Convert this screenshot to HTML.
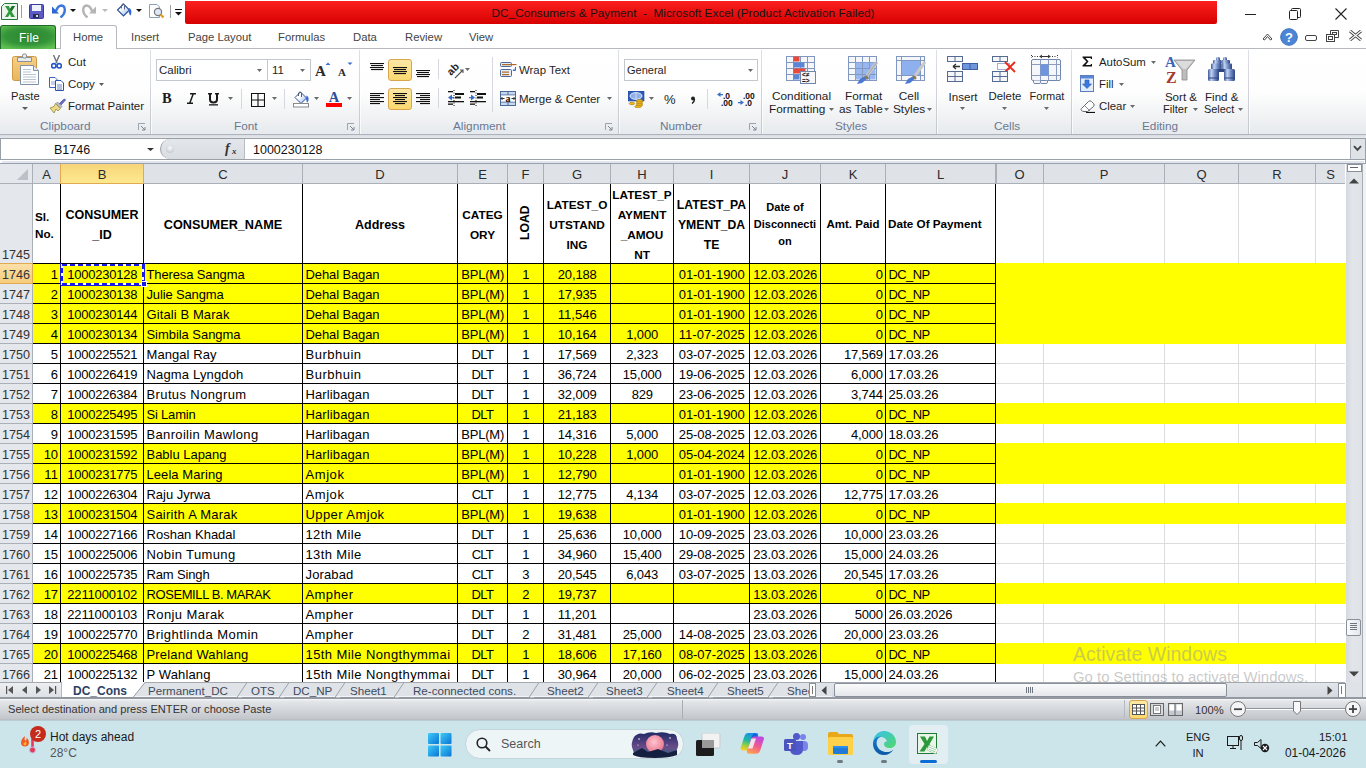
<!DOCTYPE html><html><head><meta charset="utf-8"><style>
*{box-sizing:border-box;margin:0;padding:0}
html,body{width:1366px;height:768px;overflow:hidden;background:#fff}
body{position:relative;font-family:"Liberation Sans",sans-serif;color:#000}
.a{position:absolute}
.ui{font-size:11.5px;color:#1e395b;white-space:nowrap}
.c{position:absolute;height:20px;line-height:20px;font-size:13px;white-space:nowrap;overflow:hidden;padding:0 2px 0 2.5px}
.l{text-align:left}.r{text-align:right}.m{text-align:center}
.hl{position:absolute;background:#000}
.gl{position:absolute;background:#dadcdd}
.ch{position:absolute;top:164px;height:19px;line-height:21px;text-align:center;font-size:13px;color:#2b2b2b;background:#dfe2e7}
.rh{position:absolute;left:0;width:32px;height:19px;line-height:23px;text-align:right;padding-right:2px;font-size:12.6px;color:#333;background:#e4e7ec}
.hb{font-weight:bold;font-size:13px;text-align:center;position:absolute;line-height:20px;white-space:nowrap}
</style></head><body>
<div class="a" style="left:0;top:163px;width:1345px;height:21px;background:#abb0b8"></div>
<div class="a" style="left:0;top:164px;width:32px;height:19px;background:#e4e7ec"></div>
<svg class="a" style="left:17px;top:169px" width="12" height="12"><path d="M11 0V11H0Z" fill="#bcc1c7"/></svg>
<div class="ch" style="left:33px;width:27px">A</div>
<div class="ch" style="left:60px;width:84px;background:linear-gradient(#f8d57a,#fde98f);border:1px solid #e2a951;border-top:none;top:164px;height:20px;line-height:21px">B</div>
<div class="ch" style="left:144px;width:158px">C</div>
<div class="ch" style="left:303px;width:154px">D</div>
<div class="ch" style="left:458px;width:49px">E</div>
<div class="ch" style="left:508px;width:35px">F</div>
<div class="ch" style="left:544px;width:66px">G</div>
<div class="ch" style="left:611px;width:62px">H</div>
<div class="ch" style="left:674px;width:75px">I</div>
<div class="ch" style="left:750px;width:70px">J</div>
<div class="ch" style="left:821px;width:64px">K</div>
<div class="ch" style="left:886px;width:109px">L</div>
<div class="ch" style="left:996px;width:47px">O</div>
<div class="ch" style="left:1044px;width:120px">P</div>
<div class="ch" style="left:1165px;width:73px">Q</div>
<div class="ch" style="left:1239px;width:76px">R</div>
<div class="ch" style="left:1316px;width:29px">S</div>
<div class="a" style="left:996px;top:164px;width:1px;height:19px;background:#abb0b8"></div>
<div class="a" style="left:33px;top:184px;width:1312px;height:499px;background:#fff"></div>
<div class="a" style="left:0;top:184px;width:33px;height:499px;background:#abb0b8"></div>
<div class="rh" style="top:184px;height:79px;line-height:13px;padding-top:65px">1745</div>
<div class="rh" style="top:263px;height:21px;line-height:22px;background:linear-gradient(#fbe0a8,#f5cc7c);border:1px solid #e2a951;border-left:none;width:33px">1746</div>
<div class="rh" style="top:284px">1747</div>
<div class="rh" style="top:304px">1748</div>
<div class="rh" style="top:324px">1749</div>
<div class="rh" style="top:344px">1750</div>
<div class="rh" style="top:364px">1751</div>
<div class="rh" style="top:384px">1752</div>
<div class="rh" style="top:404px">1753</div>
<div class="rh" style="top:424px">1754</div>
<div class="rh" style="top:444px">1755</div>
<div class="rh" style="top:464px">1756</div>
<div class="rh" style="top:484px">1757</div>
<div class="rh" style="top:504px">1758</div>
<div class="rh" style="top:524px">1759</div>
<div class="rh" style="top:544px">1760</div>
<div class="rh" style="top:564px">1761</div>
<div class="rh" style="top:584px">1762</div>
<div class="rh" style="top:604px">1763</div>
<div class="rh" style="top:624px">1764</div>
<div class="rh" style="top:644px">1765</div>
<div class="rh" style="top:664px">1766</div>
<div class="gl" style="left:996px;top:263px;width:349px;height:1px"></div>
<div class="gl" style="left:996px;top:283px;width:349px;height:1px"></div>
<div class="gl" style="left:996px;top:303px;width:349px;height:1px"></div>
<div class="gl" style="left:996px;top:323px;width:349px;height:1px"></div>
<div class="gl" style="left:996px;top:343px;width:349px;height:1px"></div>
<div class="gl" style="left:996px;top:363px;width:349px;height:1px"></div>
<div class="gl" style="left:996px;top:383px;width:349px;height:1px"></div>
<div class="gl" style="left:996px;top:403px;width:349px;height:1px"></div>
<div class="gl" style="left:996px;top:423px;width:349px;height:1px"></div>
<div class="gl" style="left:996px;top:443px;width:349px;height:1px"></div>
<div class="gl" style="left:996px;top:463px;width:349px;height:1px"></div>
<div class="gl" style="left:996px;top:483px;width:349px;height:1px"></div>
<div class="gl" style="left:996px;top:503px;width:349px;height:1px"></div>
<div class="gl" style="left:996px;top:523px;width:349px;height:1px"></div>
<div class="gl" style="left:996px;top:543px;width:349px;height:1px"></div>
<div class="gl" style="left:996px;top:563px;width:349px;height:1px"></div>
<div class="gl" style="left:996px;top:583px;width:349px;height:1px"></div>
<div class="gl" style="left:996px;top:603px;width:349px;height:1px"></div>
<div class="gl" style="left:996px;top:623px;width:349px;height:1px"></div>
<div class="gl" style="left:996px;top:643px;width:349px;height:1px"></div>
<div class="gl" style="left:996px;top:663px;width:349px;height:1px"></div>
<div class="gl" style="left:1043px;top:184px;width:1px;height:499px"></div>
<div class="gl" style="left:1164px;top:184px;width:1px;height:499px"></div>
<div class="gl" style="left:1238px;top:184px;width:1px;height:499px"></div>
<div class="gl" style="left:1315px;top:184px;width:1px;height:499px"></div>
<div class="a" style="left:33px;top:263px;width:1313px;height:21px;background:#ff0"></div>
<div class="a" style="left:33px;top:283px;width:1313px;height:21px;background:#ff0"></div>
<div class="a" style="left:33px;top:303px;width:1313px;height:21px;background:#ff0"></div>
<div class="a" style="left:33px;top:323px;width:1313px;height:21px;background:#ff0"></div>
<div class="a" style="left:33px;top:403px;width:1313px;height:21px;background:#ff0"></div>
<div class="a" style="left:33px;top:443px;width:1313px;height:21px;background:#ff0"></div>
<div class="a" style="left:33px;top:463px;width:1313px;height:21px;background:#ff0"></div>
<div class="a" style="left:33px;top:503px;width:1313px;height:21px;background:#ff0"></div>
<div class="a" style="left:33px;top:583px;width:1313px;height:21px;background:#ff0"></div>
<div class="a" style="left:33px;top:643px;width:1313px;height:21px;background:#ff0"></div>
<div class="hl" style="left:33px;top:263px;width:963px;height:1px"></div>
<div class="hl" style="left:33px;top:283px;width:963px;height:1px"></div>
<div class="hl" style="left:33px;top:303px;width:963px;height:1px"></div>
<div class="hl" style="left:33px;top:323px;width:963px;height:1px"></div>
<div class="hl" style="left:33px;top:343px;width:963px;height:1px"></div>
<div class="hl" style="left:33px;top:363px;width:963px;height:1px"></div>
<div class="hl" style="left:33px;top:383px;width:963px;height:1px"></div>
<div class="hl" style="left:33px;top:403px;width:963px;height:1px"></div>
<div class="hl" style="left:33px;top:423px;width:963px;height:1px"></div>
<div class="hl" style="left:33px;top:443px;width:963px;height:1px"></div>
<div class="hl" style="left:33px;top:463px;width:963px;height:1px"></div>
<div class="hl" style="left:33px;top:483px;width:963px;height:1px"></div>
<div class="hl" style="left:33px;top:503px;width:963px;height:1px"></div>
<div class="hl" style="left:33px;top:523px;width:963px;height:1px"></div>
<div class="hl" style="left:33px;top:543px;width:963px;height:1px"></div>
<div class="hl" style="left:33px;top:563px;width:963px;height:1px"></div>
<div class="hl" style="left:33px;top:583px;width:963px;height:1px"></div>
<div class="hl" style="left:33px;top:603px;width:963px;height:1px"></div>
<div class="hl" style="left:33px;top:623px;width:963px;height:1px"></div>
<div class="hl" style="left:33px;top:643px;width:963px;height:1px"></div>
<div class="hl" style="left:33px;top:663px;width:963px;height:1px"></div>
<div class="hl" style="left:60px;top:184px;width:1px;height:499px"></div>
<div class="hl" style="left:143px;top:184px;width:1px;height:499px"></div>
<div class="hl" style="left:302px;top:184px;width:1px;height:499px"></div>
<div class="hl" style="left:457px;top:184px;width:1px;height:499px"></div>
<div class="hl" style="left:507px;top:184px;width:1px;height:499px"></div>
<div class="hl" style="left:543px;top:184px;width:1px;height:499px"></div>
<div class="hl" style="left:610px;top:184px;width:1px;height:499px"></div>
<div class="hl" style="left:673px;top:184px;width:1px;height:499px"></div>
<div class="hl" style="left:749px;top:184px;width:1px;height:499px"></div>
<div class="hl" style="left:820px;top:184px;width:1px;height:499px"></div>
<div class="hl" style="left:885px;top:184px;width:1px;height:499px"></div>
<div class="hl" style="left:995px;top:184px;width:1px;height:499px"></div>
<div class="hb" style="left:35px;top:208px;font-size:11.7px;line-height:17px;text-align:left">Sl.<br>No.</div>
<div class="hb" style="left:61px;width:82px;top:205px;font-size:12.5px;line-height:20px">CONSUMER<br>_ID</div>
<div class="hb" style="left:144px;width:158px;top:215px;font-size:12.7px;line-height:20px">CONSUMER_NAME</div>
<div class="hb" style="left:303px;width:154px;top:215px;font-size:12.5px;line-height:20px">Address</div>
<div class="hb" style="left:458px;width:49px;top:205px;font-size:11.8px;line-height:20px">CATEG<br>ORY</div>
<div class="hb" style="left:508px;top:215px;width:34px;line-height:16px;font-size:12.2px;transform:rotate(-90deg)">LOAD</div>
<div class="hb" style="left:544px;width:66px;top:195px;font-size:11.8px;line-height:20px">LATEST_O<br>UTSTAND<br>ING</div>
<div class="hb" style="left:611px;width:62px;top:185px;font-size:11.8px;line-height:20px">LATEST_P<br>AYMENT<br>_AMOU<br>NT</div>
<div class="hb" style="left:674px;width:75px;top:195px;font-size:12.2px;line-height:20px">LATEST_PA<br>YMENT_DA<br>TE</div>
<div class="hb" style="left:750px;width:70px;top:199px;font-size:11px;line-height:17px">Date of<br>Disconnecti<br>on</div>
<div class="hb" style="left:821px;width:64px;top:214px;font-size:11.5px;line-height:20px">Amt. Paid</div>
<div class="hb" style="left:888px;top:214px;text-align:left;font-size:11.7px">Date Of Payment</div>
<div class="c r" style="left:33px;top:265px;width:27px"><span style="letter-spacing:-0.234px;margin-right:0.234px">1</span></div>
<div class="c m" style="left:61px;top:265px;width:82px"><span style="letter-spacing:-0.231px;margin-right:0.231px">1000230128</span></div>
<div class="c l" style="left:144px;top:265px;width:158px"><span style="letter-spacing:-0.124px;margin-right:0.124px">Theresa Sangma</span></div>
<div class="c l" style="left:303px;top:265px;width:154px"><span style="letter-spacing:-0.107px;margin-right:0.107px">Dehal Bagan</span></div>
<div class="c m" style="left:458px;top:265px;width:49px"><span style="letter-spacing:-0.177px;margin-right:0.177px">BPL(M)</span></div>
<div class="c m" style="left:508px;top:265px;width:35px"><span style="letter-spacing:-0.234px;margin-right:0.234px">1</span></div>
<div class="c m" style="left:544px;top:265px;width:66px"><span style="letter-spacing:-0.128px;margin-right:0.128px">20,188</span></div>
<div class="c m" style="left:674px;top:265px;width:75px"><span style="letter-spacing:-0.050px;margin-right:0.050px">01-01-1900</span></div>
<div class="c m" style="left:750px;top:265px;width:70px"><span style="letter-spacing:-0.108px;margin-right:0.108px">12.03.2026</span></div>
<div class="c r" style="left:821px;top:265px;width:64px"><span style="letter-spacing:-0.234px;margin-right:0.234px">0</span></div>
<div class="c l" style="left:886px;top:265px;width:109px"><span style="letter-spacing:-0.616px;margin-right:0.616px">DC_NP</span></div>
<div class="c r" style="left:33px;top:285px;width:27px"><span style="letter-spacing:-0.234px;margin-right:0.234px">2</span></div>
<div class="c m" style="left:61px;top:285px;width:82px"><span style="letter-spacing:-0.231px;margin-right:0.231px">1000230138</span></div>
<div class="c l" style="left:144px;top:285px;width:158px"><span style="letter-spacing:-0.148px;margin-right:0.148px">Julie Sangma</span></div>
<div class="c l" style="left:303px;top:285px;width:154px"><span style="letter-spacing:-0.107px;margin-right:0.107px">Dehal Bagan</span></div>
<div class="c m" style="left:458px;top:285px;width:49px"><span style="letter-spacing:-0.177px;margin-right:0.177px">BPL(M)</span></div>
<div class="c m" style="left:508px;top:285px;width:35px"><span style="letter-spacing:-0.234px;margin-right:0.234px">1</span></div>
<div class="c m" style="left:544px;top:285px;width:66px"><span style="letter-spacing:-0.128px;margin-right:0.128px">17,935</span></div>
<div class="c m" style="left:674px;top:285px;width:75px"><span style="letter-spacing:-0.050px;margin-right:0.050px">01-01-1900</span></div>
<div class="c m" style="left:750px;top:285px;width:70px"><span style="letter-spacing:-0.108px;margin-right:0.108px">12.03.2026</span></div>
<div class="c r" style="left:821px;top:285px;width:64px"><span style="letter-spacing:-0.234px;margin-right:0.234px">0</span></div>
<div class="c l" style="left:886px;top:285px;width:109px"><span style="letter-spacing:-0.616px;margin-right:0.616px">DC_NP</span></div>
<div class="c r" style="left:33px;top:305px;width:27px"><span style="letter-spacing:-0.234px;margin-right:0.234px">3</span></div>
<div class="c m" style="left:61px;top:305px;width:82px"><span style="letter-spacing:-0.231px;margin-right:0.231px">1000230144</span></div>
<div class="c l" style="left:144px;top:305px;width:158px"><span style="letter-spacing:0.097px;margin-right:-0.097px">Gitali B Marak</span></div>
<div class="c l" style="left:303px;top:305px;width:154px"><span style="letter-spacing:-0.107px;margin-right:0.107px">Dehal Bagan</span></div>
<div class="c m" style="left:458px;top:305px;width:49px"><span style="letter-spacing:-0.177px;margin-right:0.177px">BPL(M)</span></div>
<div class="c m" style="left:508px;top:305px;width:35px"><span style="letter-spacing:-0.234px;margin-right:0.234px">1</span></div>
<div class="c m" style="left:544px;top:305px;width:66px"><span style="letter-spacing:0.034px;margin-right:-0.034px">11,546</span></div>
<div class="c m" style="left:674px;top:305px;width:75px"><span style="letter-spacing:-0.050px;margin-right:0.050px">01-01-1900</span></div>
<div class="c m" style="left:750px;top:305px;width:70px"><span style="letter-spacing:-0.108px;margin-right:0.108px">12.03.2026</span></div>
<div class="c r" style="left:821px;top:305px;width:64px"><span style="letter-spacing:-0.234px;margin-right:0.234px">0</span></div>
<div class="c l" style="left:886px;top:305px;width:109px"><span style="letter-spacing:-0.616px;margin-right:0.616px">DC_NP</span></div>
<div class="c r" style="left:33px;top:325px;width:27px"><span style="letter-spacing:-0.234px;margin-right:0.234px">4</span></div>
<div class="c m" style="left:61px;top:325px;width:82px"><span style="letter-spacing:-0.231px;margin-right:0.231px">1000230134</span></div>
<div class="c l" style="left:144px;top:325px;width:158px"><span style="letter-spacing:-0.047px;margin-right:0.047px">Simbila Sangma</span></div>
<div class="c l" style="left:303px;top:325px;width:154px"><span style="letter-spacing:-0.107px;margin-right:0.107px">Dehal Bagan</span></div>
<div class="c m" style="left:458px;top:325px;width:49px"><span style="letter-spacing:-0.177px;margin-right:0.177px">BPL(M)</span></div>
<div class="c m" style="left:508px;top:325px;width:35px"><span style="letter-spacing:-0.234px;margin-right:0.234px">1</span></div>
<div class="c m" style="left:544px;top:325px;width:66px"><span style="letter-spacing:-0.128px;margin-right:0.128px">10,164</span></div>
<div class="c m" style="left:611px;top:325px;width:62px"><span style="letter-spacing:-0.109px;margin-right:0.109px">1,000</span></div>
<div class="c m" style="left:674px;top:325px;width:75px"><span style="letter-spacing:0.045px;margin-right:-0.045px">11-07-2025</span></div>
<div class="c m" style="left:750px;top:325px;width:70px"><span style="letter-spacing:-0.108px;margin-right:0.108px">12.03.2026</span></div>
<div class="c r" style="left:821px;top:325px;width:64px"><span style="letter-spacing:-0.234px;margin-right:0.234px">0</span></div>
<div class="c l" style="left:886px;top:325px;width:109px"><span style="letter-spacing:-0.616px;margin-right:0.616px">DC_NP</span></div>
<div class="c r" style="left:33px;top:345px;width:27px"><span style="letter-spacing:-0.234px;margin-right:0.234px">5</span></div>
<div class="c m" style="left:61px;top:345px;width:82px"><span style="letter-spacing:-0.231px;margin-right:0.231px">1000225521</span></div>
<div class="c l" style="left:144px;top:345px;width:158px"><span style="letter-spacing:0.062px;margin-right:-0.062px">Mangal Ray</span></div>
<div class="c l" style="left:303px;top:345px;width:154px"><span style="letter-spacing:0.494px;margin-right:-0.494px">Burbhuin</span></div>
<div class="c m" style="left:458px;top:345px;width:49px"><span style="letter-spacing:-0.536px;margin-right:0.536px">DLT</span></div>
<div class="c m" style="left:508px;top:345px;width:35px"><span style="letter-spacing:-0.234px;margin-right:0.234px">1</span></div>
<div class="c m" style="left:544px;top:345px;width:66px"><span style="letter-spacing:-0.128px;margin-right:0.128px">17,569</span></div>
<div class="c m" style="left:611px;top:345px;width:62px"><span style="letter-spacing:-0.109px;margin-right:0.109px">2,323</span></div>
<div class="c m" style="left:674px;top:345px;width:75px"><span style="letter-spacing:-0.050px;margin-right:0.050px">03-07-2025</span></div>
<div class="c m" style="left:750px;top:345px;width:70px"><span style="letter-spacing:-0.108px;margin-right:0.108px">12.03.2026</span></div>
<div class="c r" style="left:821px;top:345px;width:64px"><span style="letter-spacing:-0.128px;margin-right:0.128px">17,569</span></div>
<div class="c l" style="left:886px;top:345px;width:109px"><span style="letter-spacing:-0.076px;margin-right:0.076px">17.03.26</span></div>
<div class="c r" style="left:33px;top:365px;width:27px"><span style="letter-spacing:-0.234px;margin-right:0.234px">6</span></div>
<div class="c m" style="left:61px;top:365px;width:82px"><span style="letter-spacing:-0.231px;margin-right:0.231px">1000226419</span></div>
<div class="c l" style="left:144px;top:365px;width:158px"><span style="letter-spacing:0.160px;margin-right:-0.160px">Nagma Lyngdoh</span></div>
<div class="c l" style="left:303px;top:365px;width:154px"><span style="letter-spacing:0.494px;margin-right:-0.494px">Burbhuin</span></div>
<div class="c m" style="left:458px;top:365px;width:49px"><span style="letter-spacing:-0.536px;margin-right:0.536px">DLT</span></div>
<div class="c m" style="left:508px;top:365px;width:35px"><span style="letter-spacing:-0.234px;margin-right:0.234px">1</span></div>
<div class="c m" style="left:544px;top:365px;width:66px"><span style="letter-spacing:-0.128px;margin-right:0.128px">36,724</span></div>
<div class="c m" style="left:611px;top:365px;width:62px"><span style="letter-spacing:-0.128px;margin-right:0.128px">15,000</span></div>
<div class="c m" style="left:674px;top:365px;width:75px"><span style="letter-spacing:-0.050px;margin-right:0.050px">19-06-2025</span></div>
<div class="c m" style="left:750px;top:365px;width:70px"><span style="letter-spacing:-0.108px;margin-right:0.108px">12.03.2026</span></div>
<div class="c r" style="left:821px;top:365px;width:64px"><span style="letter-spacing:-0.109px;margin-right:0.109px">6,000</span></div>
<div class="c l" style="left:886px;top:365px;width:109px"><span style="letter-spacing:-0.076px;margin-right:0.076px">17.03.26</span></div>
<div class="c r" style="left:33px;top:385px;width:27px"><span style="letter-spacing:-0.234px;margin-right:0.234px">7</span></div>
<div class="c m" style="left:61px;top:385px;width:82px"><span style="letter-spacing:-0.231px;margin-right:0.231px">1000226384</span></div>
<div class="c l" style="left:144px;top:385px;width:158px"><span style="letter-spacing:0.382px;margin-right:-0.382px">Brutus Nongrum</span></div>
<div class="c l" style="left:303px;top:385px;width:154px"><span style="letter-spacing:0.113px;margin-right:-0.113px">Harlibagan</span></div>
<div class="c m" style="left:458px;top:385px;width:49px"><span style="letter-spacing:-0.536px;margin-right:0.536px">DLT</span></div>
<div class="c m" style="left:508px;top:385px;width:35px"><span style="letter-spacing:-0.234px;margin-right:0.234px">1</span></div>
<div class="c m" style="left:544px;top:385px;width:66px"><span style="letter-spacing:-0.128px;margin-right:0.128px">32,009</span></div>
<div class="c m" style="left:611px;top:385px;width:62px"><span style="letter-spacing:-0.234px;margin-right:0.234px">829</span></div>
<div class="c m" style="left:674px;top:385px;width:75px"><span style="letter-spacing:-0.050px;margin-right:0.050px">23-06-2025</span></div>
<div class="c m" style="left:750px;top:385px;width:70px"><span style="letter-spacing:-0.108px;margin-right:0.108px">12.03.2026</span></div>
<div class="c r" style="left:821px;top:385px;width:64px"><span style="letter-spacing:-0.109px;margin-right:0.109px">3,744</span></div>
<div class="c l" style="left:886px;top:385px;width:109px"><span style="letter-spacing:-0.076px;margin-right:0.076px">25.03.26</span></div>
<div class="c r" style="left:33px;top:405px;width:27px"><span style="letter-spacing:-0.234px;margin-right:0.234px">8</span></div>
<div class="c m" style="left:61px;top:405px;width:82px"><span style="letter-spacing:-0.231px;margin-right:0.231px">1000225495</span></div>
<div class="c l" style="left:144px;top:405px;width:158px"><span style="letter-spacing:-0.197px;margin-right:0.197px">Si Lamin</span></div>
<div class="c l" style="left:303px;top:405px;width:154px"><span style="letter-spacing:0.113px;margin-right:-0.113px">Harlibagan</span></div>
<div class="c m" style="left:458px;top:405px;width:49px"><span style="letter-spacing:-0.536px;margin-right:0.536px">DLT</span></div>
<div class="c m" style="left:508px;top:405px;width:35px"><span style="letter-spacing:-0.234px;margin-right:0.234px">1</span></div>
<div class="c m" style="left:544px;top:405px;width:66px"><span style="letter-spacing:-0.128px;margin-right:0.128px">21,183</span></div>
<div class="c m" style="left:674px;top:405px;width:75px"><span style="letter-spacing:-0.050px;margin-right:0.050px">01-01-1900</span></div>
<div class="c m" style="left:750px;top:405px;width:70px"><span style="letter-spacing:-0.108px;margin-right:0.108px">12.03.2026</span></div>
<div class="c r" style="left:821px;top:405px;width:64px"><span style="letter-spacing:-0.234px;margin-right:0.234px">0</span></div>
<div class="c l" style="left:886px;top:405px;width:109px"><span style="letter-spacing:-0.616px;margin-right:0.616px">DC_NP</span></div>
<div class="c r" style="left:33px;top:425px;width:27px"><span style="letter-spacing:-0.234px;margin-right:0.234px">9</span></div>
<div class="c m" style="left:61px;top:425px;width:82px"><span style="letter-spacing:-0.231px;margin-right:0.231px">1000231595</span></div>
<div class="c l" style="left:144px;top:425px;width:158px"><span style="letter-spacing:0.339px;margin-right:-0.339px">Banroilin Mawlong</span></div>
<div class="c l" style="left:303px;top:425px;width:154px"><span style="letter-spacing:0.113px;margin-right:-0.113px">Harlibagan</span></div>
<div class="c m" style="left:458px;top:425px;width:49px"><span style="letter-spacing:-0.177px;margin-right:0.177px">BPL(M)</span></div>
<div class="c m" style="left:508px;top:425px;width:35px"><span style="letter-spacing:-0.234px;margin-right:0.234px">1</span></div>
<div class="c m" style="left:544px;top:425px;width:66px"><span style="letter-spacing:-0.128px;margin-right:0.128px">14,316</span></div>
<div class="c m" style="left:611px;top:425px;width:62px"><span style="letter-spacing:-0.109px;margin-right:0.109px">5,000</span></div>
<div class="c m" style="left:674px;top:425px;width:75px"><span style="letter-spacing:-0.050px;margin-right:0.050px">25-08-2025</span></div>
<div class="c m" style="left:750px;top:425px;width:70px"><span style="letter-spacing:-0.108px;margin-right:0.108px">12.03.2026</span></div>
<div class="c r" style="left:821px;top:425px;width:64px"><span style="letter-spacing:-0.109px;margin-right:0.109px">4,000</span></div>
<div class="c l" style="left:886px;top:425px;width:109px"><span style="letter-spacing:-0.076px;margin-right:0.076px">18.03.26</span></div>
<div class="c r" style="left:33px;top:445px;width:27px"><span style="letter-spacing:-0.234px;margin-right:0.234px">10</span></div>
<div class="c m" style="left:61px;top:445px;width:82px"><span style="letter-spacing:-0.231px;margin-right:0.231px">1000231592</span></div>
<div class="c l" style="left:144px;top:445px;width:158px"><span style="letter-spacing:-0.021px;margin-right:0.021px">Bablu Lapang</span></div>
<div class="c l" style="left:303px;top:445px;width:154px"><span style="letter-spacing:0.113px;margin-right:-0.113px">Harlibagan</span></div>
<div class="c m" style="left:458px;top:445px;width:49px"><span style="letter-spacing:-0.177px;margin-right:0.177px">BPL(M)</span></div>
<div class="c m" style="left:508px;top:445px;width:35px"><span style="letter-spacing:-0.234px;margin-right:0.234px">1</span></div>
<div class="c m" style="left:544px;top:445px;width:66px"><span style="letter-spacing:-0.128px;margin-right:0.128px">10,228</span></div>
<div class="c m" style="left:611px;top:445px;width:62px"><span style="letter-spacing:-0.109px;margin-right:0.109px">1,000</span></div>
<div class="c m" style="left:674px;top:445px;width:75px"><span style="letter-spacing:-0.050px;margin-right:0.050px">05-04-2024</span></div>
<div class="c m" style="left:750px;top:445px;width:70px"><span style="letter-spacing:-0.108px;margin-right:0.108px">12.03.2026</span></div>
<div class="c r" style="left:821px;top:445px;width:64px"><span style="letter-spacing:-0.234px;margin-right:0.234px">0</span></div>
<div class="c l" style="left:886px;top:445px;width:109px"><span style="letter-spacing:-0.616px;margin-right:0.616px">DC_NP</span></div>
<div class="c r" style="left:33px;top:465px;width:27px"><span style="letter-spacing:0.250px;margin-right:-0.250px">11</span></div>
<div class="c m" style="left:61px;top:465px;width:82px"><span style="letter-spacing:-0.231px;margin-right:0.231px">1000231775</span></div>
<div class="c l" style="left:144px;top:465px;width:158px"><span style="letter-spacing:0.070px;margin-right:-0.070px">Leela Maring</span></div>
<div class="c l" style="left:303px;top:465px;width:154px"><span style="letter-spacing:0.575px;margin-right:-0.575px">Amjok</span></div>
<div class="c m" style="left:458px;top:465px;width:49px"><span style="letter-spacing:-0.177px;margin-right:0.177px">BPL(M)</span></div>
<div class="c m" style="left:508px;top:465px;width:35px"><span style="letter-spacing:-0.234px;margin-right:0.234px">1</span></div>
<div class="c m" style="left:544px;top:465px;width:66px"><span style="letter-spacing:-0.128px;margin-right:0.128px">12,790</span></div>
<div class="c m" style="left:674px;top:465px;width:75px"><span style="letter-spacing:-0.050px;margin-right:0.050px">01-01-1900</span></div>
<div class="c m" style="left:750px;top:465px;width:70px"><span style="letter-spacing:-0.108px;margin-right:0.108px">12.03.2026</span></div>
<div class="c r" style="left:821px;top:465px;width:64px"><span style="letter-spacing:-0.234px;margin-right:0.234px">0</span></div>
<div class="c l" style="left:886px;top:465px;width:109px"><span style="letter-spacing:-0.616px;margin-right:0.616px">DC_NP</span></div>
<div class="c r" style="left:33px;top:485px;width:27px"><span style="letter-spacing:-0.234px;margin-right:0.234px">12</span></div>
<div class="c m" style="left:61px;top:485px;width:82px"><span style="letter-spacing:-0.231px;margin-right:0.231px">1000226304</span></div>
<div class="c l" style="left:144px;top:485px;width:158px"><span style="letter-spacing:-0.030px;margin-right:0.030px">Raju Jyrwa</span></div>
<div class="c l" style="left:303px;top:485px;width:154px"><span style="letter-spacing:0.575px;margin-right:-0.575px">Amjok</span></div>
<div class="c m" style="left:458px;top:485px;width:49px"><span style="letter-spacing:-0.870px;margin-right:0.870px">CLT</span></div>
<div class="c m" style="left:508px;top:485px;width:35px"><span style="letter-spacing:-0.234px;margin-right:0.234px">1</span></div>
<div class="c m" style="left:544px;top:485px;width:66px"><span style="letter-spacing:-0.128px;margin-right:0.128px">12,775</span></div>
<div class="c m" style="left:611px;top:485px;width:62px"><span style="letter-spacing:-0.109px;margin-right:0.109px">4,134</span></div>
<div class="c m" style="left:674px;top:485px;width:75px"><span style="letter-spacing:-0.050px;margin-right:0.050px">03-07-2025</span></div>
<div class="c m" style="left:750px;top:485px;width:70px"><span style="letter-spacing:-0.108px;margin-right:0.108px">12.03.2026</span></div>
<div class="c r" style="left:821px;top:485px;width:64px"><span style="letter-spacing:-0.128px;margin-right:0.128px">12,775</span></div>
<div class="c l" style="left:886px;top:485px;width:109px"><span style="letter-spacing:-0.076px;margin-right:0.076px">17.03.26</span></div>
<div class="c r" style="left:33px;top:505px;width:27px"><span style="letter-spacing:-0.234px;margin-right:0.234px">13</span></div>
<div class="c m" style="left:61px;top:505px;width:82px"><span style="letter-spacing:-0.231px;margin-right:0.231px">1000231504</span></div>
<div class="c l" style="left:144px;top:505px;width:158px"><span style="letter-spacing:0.237px;margin-right:-0.237px">Sairith A Marak</span></div>
<div class="c l" style="left:303px;top:505px;width:154px"><span style="letter-spacing:0.416px;margin-right:-0.416px">Upper Amjok</span></div>
<div class="c m" style="left:458px;top:505px;width:49px"><span style="letter-spacing:-0.177px;margin-right:0.177px">BPL(M)</span></div>
<div class="c m" style="left:508px;top:505px;width:35px"><span style="letter-spacing:-0.234px;margin-right:0.234px">1</span></div>
<div class="c m" style="left:544px;top:505px;width:66px"><span style="letter-spacing:-0.128px;margin-right:0.128px">19,638</span></div>
<div class="c m" style="left:674px;top:505px;width:75px"><span style="letter-spacing:-0.050px;margin-right:0.050px">01-01-1900</span></div>
<div class="c m" style="left:750px;top:505px;width:70px"><span style="letter-spacing:-0.108px;margin-right:0.108px">12.03.2026</span></div>
<div class="c r" style="left:821px;top:505px;width:64px"><span style="letter-spacing:-0.234px;margin-right:0.234px">0</span></div>
<div class="c l" style="left:886px;top:505px;width:109px"><span style="letter-spacing:-0.616px;margin-right:0.616px">DC_NP</span></div>
<div class="c r" style="left:33px;top:525px;width:27px"><span style="letter-spacing:-0.234px;margin-right:0.234px">14</span></div>
<div class="c m" style="left:61px;top:525px;width:82px"><span style="letter-spacing:-0.231px;margin-right:0.231px">1000227166</span></div>
<div class="c l" style="left:144px;top:525px;width:158px"><span style="letter-spacing:0.007px;margin-right:-0.007px">Roshan Khadal</span></div>
<div class="c l" style="left:303px;top:525px;width:154px"><span style="letter-spacing:0.361px;margin-right:-0.361px">12th Mile</span></div>
<div class="c m" style="left:458px;top:525px;width:49px"><span style="letter-spacing:-0.536px;margin-right:0.536px">DLT</span></div>
<div class="c m" style="left:508px;top:525px;width:35px"><span style="letter-spacing:-0.234px;margin-right:0.234px">1</span></div>
<div class="c m" style="left:544px;top:525px;width:66px"><span style="letter-spacing:-0.128px;margin-right:0.128px">25,636</span></div>
<div class="c m" style="left:611px;top:525px;width:62px"><span style="letter-spacing:-0.128px;margin-right:0.128px">10,000</span></div>
<div class="c m" style="left:674px;top:525px;width:75px"><span style="letter-spacing:-0.050px;margin-right:0.050px">10-09-2025</span></div>
<div class="c m" style="left:750px;top:525px;width:70px"><span style="letter-spacing:-0.108px;margin-right:0.108px">23.03.2026</span></div>
<div class="c r" style="left:821px;top:525px;width:64px"><span style="letter-spacing:-0.128px;margin-right:0.128px">10,000</span></div>
<div class="c l" style="left:886px;top:525px;width:109px"><span style="letter-spacing:-0.076px;margin-right:0.076px">23.03.26</span></div>
<div class="c r" style="left:33px;top:545px;width:27px"><span style="letter-spacing:-0.234px;margin-right:0.234px">15</span></div>
<div class="c m" style="left:61px;top:545px;width:82px"><span style="letter-spacing:-0.231px;margin-right:0.231px">1000225006</span></div>
<div class="c l" style="left:144px;top:545px;width:158px"><span style="letter-spacing:0.370px;margin-right:-0.370px">Nobin Tumung</span></div>
<div class="c l" style="left:303px;top:545px;width:154px"><span style="letter-spacing:0.361px;margin-right:-0.361px">13th Mile</span></div>
<div class="c m" style="left:458px;top:545px;width:49px"><span style="letter-spacing:-0.870px;margin-right:0.870px">CLT</span></div>
<div class="c m" style="left:508px;top:545px;width:35px"><span style="letter-spacing:-0.234px;margin-right:0.234px">1</span></div>
<div class="c m" style="left:544px;top:545px;width:66px"><span style="letter-spacing:-0.128px;margin-right:0.128px">34,960</span></div>
<div class="c m" style="left:611px;top:545px;width:62px"><span style="letter-spacing:-0.128px;margin-right:0.128px">15,400</span></div>
<div class="c m" style="left:674px;top:545px;width:75px"><span style="letter-spacing:-0.050px;margin-right:0.050px">29-08-2025</span></div>
<div class="c m" style="left:750px;top:545px;width:70px"><span style="letter-spacing:-0.108px;margin-right:0.108px">23.03.2026</span></div>
<div class="c r" style="left:821px;top:545px;width:64px"><span style="letter-spacing:-0.128px;margin-right:0.128px">15,000</span></div>
<div class="c l" style="left:886px;top:545px;width:109px"><span style="letter-spacing:-0.076px;margin-right:0.076px">24.03.26</span></div>
<div class="c r" style="left:33px;top:565px;width:27px"><span style="letter-spacing:-0.234px;margin-right:0.234px">16</span></div>
<div class="c m" style="left:61px;top:565px;width:82px"><span style="letter-spacing:-0.231px;margin-right:0.231px">1000225735</span></div>
<div class="c l" style="left:144px;top:565px;width:158px"><span style="letter-spacing:-0.146px;margin-right:0.146px">Ram Singh</span></div>
<div class="c l" style="left:303px;top:565px;width:154px"><span style="letter-spacing:0.145px;margin-right:-0.145px">Jorabad</span></div>
<div class="c m" style="left:458px;top:565px;width:49px"><span style="letter-spacing:-0.870px;margin-right:0.870px">CLT</span></div>
<div class="c m" style="left:508px;top:565px;width:35px"><span style="letter-spacing:-0.234px;margin-right:0.234px">3</span></div>
<div class="c m" style="left:544px;top:565px;width:66px"><span style="letter-spacing:-0.128px;margin-right:0.128px">20,545</span></div>
<div class="c m" style="left:611px;top:565px;width:62px"><span style="letter-spacing:-0.109px;margin-right:0.109px">6,043</span></div>
<div class="c m" style="left:674px;top:565px;width:75px"><span style="letter-spacing:-0.050px;margin-right:0.050px">03-07-2025</span></div>
<div class="c m" style="left:750px;top:565px;width:70px"><span style="letter-spacing:-0.108px;margin-right:0.108px">13.03.2026</span></div>
<div class="c r" style="left:821px;top:565px;width:64px"><span style="letter-spacing:-0.128px;margin-right:0.128px">20,545</span></div>
<div class="c l" style="left:886px;top:565px;width:109px"><span style="letter-spacing:-0.076px;margin-right:0.076px">17.03.26</span></div>
<div class="c r" style="left:33px;top:585px;width:27px"><span style="letter-spacing:-0.234px;margin-right:0.234px">17</span></div>
<div class="c m" style="left:61px;top:585px;width:82px"><span style="letter-spacing:-0.134px;margin-right:0.134px">2211000102</span></div>
<div class="c l" style="left:144px;top:585px;width:158px"><span style="letter-spacing:-0.412px;margin-right:0.412px">ROSEMILL B. MARAK</span></div>
<div class="c l" style="left:303px;top:585px;width:154px"><span style="letter-spacing:0.411px;margin-right:-0.411px">Ampher</span></div>
<div class="c m" style="left:458px;top:585px;width:49px"><span style="letter-spacing:-0.536px;margin-right:0.536px">DLT</span></div>
<div class="c m" style="left:508px;top:585px;width:35px"><span style="letter-spacing:-0.234px;margin-right:0.234px">2</span></div>
<div class="c m" style="left:544px;top:585px;width:66px"><span style="letter-spacing:-0.128px;margin-right:0.128px">19,737</span></div>
<div class="c m" style="left:750px;top:585px;width:70px"><span style="letter-spacing:-0.108px;margin-right:0.108px">13.03.2026</span></div>
<div class="c r" style="left:821px;top:585px;width:64px"><span style="letter-spacing:-0.234px;margin-right:0.234px">0</span></div>
<div class="c l" style="left:886px;top:585px;width:109px"><span style="letter-spacing:-0.616px;margin-right:0.616px">DC_NP</span></div>
<div class="c r" style="left:33px;top:605px;width:27px"><span style="letter-spacing:-0.234px;margin-right:0.234px">18</span></div>
<div class="c m" style="left:61px;top:605px;width:82px"><span style="letter-spacing:-0.134px;margin-right:0.134px">2211000103</span></div>
<div class="c l" style="left:144px;top:605px;width:158px"><span style="letter-spacing:0.391px;margin-right:-0.391px">Ronju Marak</span></div>
<div class="c l" style="left:303px;top:605px;width:154px"><span style="letter-spacing:0.411px;margin-right:-0.411px">Ampher</span></div>
<div class="c m" style="left:458px;top:605px;width:49px"><span style="letter-spacing:-0.536px;margin-right:0.536px">DLT</span></div>
<div class="c m" style="left:508px;top:605px;width:35px"><span style="letter-spacing:-0.234px;margin-right:0.234px">1</span></div>
<div class="c m" style="left:544px;top:605px;width:66px"><span style="letter-spacing:0.034px;margin-right:-0.034px">11,201</span></div>
<div class="c m" style="left:750px;top:605px;width:70px"><span style="letter-spacing:-0.108px;margin-right:0.108px">23.03.2026</span></div>
<div class="c r" style="left:821px;top:605px;width:64px"><span style="letter-spacing:-0.230px;margin-right:0.230px">5000</span></div>
<div class="c l" style="left:886px;top:605px;width:109px"><span style="letter-spacing:-0.108px;margin-right:0.108px">26.03.2026</span></div>
<div class="c r" style="left:33px;top:625px;width:27px"><span style="letter-spacing:-0.234px;margin-right:0.234px">19</span></div>
<div class="c m" style="left:61px;top:625px;width:82px"><span style="letter-spacing:-0.231px;margin-right:0.231px">1000225770</span></div>
<div class="c l" style="left:144px;top:625px;width:158px"><span style="letter-spacing:0.468px;margin-right:-0.468px">Brightlinda Momin</span></div>
<div class="c l" style="left:303px;top:625px;width:154px"><span style="letter-spacing:0.411px;margin-right:-0.411px">Ampher</span></div>
<div class="c m" style="left:458px;top:625px;width:49px"><span style="letter-spacing:-0.536px;margin-right:0.536px">DLT</span></div>
<div class="c m" style="left:508px;top:625px;width:35px"><span style="letter-spacing:-0.234px;margin-right:0.234px">2</span></div>
<div class="c m" style="left:544px;top:625px;width:66px"><span style="letter-spacing:-0.128px;margin-right:0.128px">31,481</span></div>
<div class="c m" style="left:611px;top:625px;width:62px"><span style="letter-spacing:-0.128px;margin-right:0.128px">25,000</span></div>
<div class="c m" style="left:674px;top:625px;width:75px"><span style="letter-spacing:-0.050px;margin-right:0.050px">14-08-2025</span></div>
<div class="c m" style="left:750px;top:625px;width:70px"><span style="letter-spacing:-0.108px;margin-right:0.108px">23.03.2026</span></div>
<div class="c r" style="left:821px;top:625px;width:64px"><span style="letter-spacing:-0.128px;margin-right:0.128px">20,000</span></div>
<div class="c l" style="left:886px;top:625px;width:109px"><span style="letter-spacing:-0.076px;margin-right:0.076px">23.03.26</span></div>
<div class="c r" style="left:33px;top:645px;width:27px"><span style="letter-spacing:-0.234px;margin-right:0.234px">20</span></div>
<div class="c m" style="left:61px;top:645px;width:82px"><span style="letter-spacing:-0.231px;margin-right:0.231px">1000225468</span></div>
<div class="c l" style="left:144px;top:645px;width:158px"><span style="letter-spacing:0.183px;margin-right:-0.183px">Preland Wahlang</span></div>
<div class="c l" style="left:303px;top:645px;width:154px"><span style="letter-spacing:0.402px;margin-right:-0.402px">15th Mile Nongthymmai</span></div>
<div class="c m" style="left:458px;top:645px;width:49px"><span style="letter-spacing:-0.536px;margin-right:0.536px">DLT</span></div>
<div class="c m" style="left:508px;top:645px;width:35px"><span style="letter-spacing:-0.234px;margin-right:0.234px">1</span></div>
<div class="c m" style="left:544px;top:645px;width:66px"><span style="letter-spacing:-0.128px;margin-right:0.128px">18,606</span></div>
<div class="c m" style="left:611px;top:645px;width:62px"><span style="letter-spacing:-0.128px;margin-right:0.128px">17,160</span></div>
<div class="c m" style="left:674px;top:645px;width:75px"><span style="letter-spacing:-0.050px;margin-right:0.050px">08-07-2025</span></div>
<div class="c m" style="left:750px;top:645px;width:70px"><span style="letter-spacing:-0.108px;margin-right:0.108px">13.03.2026</span></div>
<div class="c r" style="left:821px;top:645px;width:64px"><span style="letter-spacing:-0.234px;margin-right:0.234px">0</span></div>
<div class="c l" style="left:886px;top:645px;width:109px"><span style="letter-spacing:-0.616px;margin-right:0.616px">DC_NP</span></div>
<div class="c r" style="left:33px;top:665px;width:27px"><span style="letter-spacing:-0.234px;margin-right:0.234px">21</span></div>
<div class="c m" style="left:61px;top:665px;width:82px"><span style="letter-spacing:-0.231px;margin-right:0.231px">1000225132</span></div>
<div class="c l" style="left:144px;top:665px;width:158px"><span style="letter-spacing:0.125px;margin-right:-0.125px">P Wahlang</span></div>
<div class="c l" style="left:303px;top:665px;width:154px"><span style="letter-spacing:0.402px;margin-right:-0.402px">15th Mile Nongthymmai</span></div>
<div class="c m" style="left:458px;top:665px;width:49px"><span style="letter-spacing:-0.536px;margin-right:0.536px">DLT</span></div>
<div class="c m" style="left:508px;top:665px;width:35px"><span style="letter-spacing:-0.234px;margin-right:0.234px">1</span></div>
<div class="c m" style="left:544px;top:665px;width:66px"><span style="letter-spacing:-0.128px;margin-right:0.128px">30,964</span></div>
<div class="c m" style="left:611px;top:665px;width:62px"><span style="letter-spacing:-0.128px;margin-right:0.128px">20,000</span></div>
<div class="c m" style="left:674px;top:665px;width:75px"><span style="letter-spacing:-0.050px;margin-right:0.050px">06-02-2025</span></div>
<div class="c m" style="left:750px;top:665px;width:70px"><span style="letter-spacing:-0.108px;margin-right:0.108px">23.03.2026</span></div>
<div class="c r" style="left:821px;top:665px;width:64px"><span style="letter-spacing:-0.128px;margin-right:0.128px">15,000</span></div>
<div class="c l" style="left:886px;top:665px;width:109px"><span style="letter-spacing:-0.076px;margin-right:0.076px">24.03.26</span></div>
<svg class="a" style="left:58px;top:261px" width="92" height="28" viewBox="0 0 92 28"><path d="M2.5 2V24.5H86.5V2" fill="none" stroke="#1a1ae6" stroke-width="1"/><rect x="4" y="4" width="81" height="19" fill="none" stroke="#fff" stroke-width="2"/><rect x="4" y="4" width="81" height="19" fill="none" stroke="#1a1ae6" stroke-width="2" stroke-dasharray="5 3"/><rect x="83.5" y="20.5" width="5" height="5" fill="#1a1ae6" stroke="#fff" stroke-width="1"/></svg>
<div class="a" style="left:0;top:0;width:1366px;height:49px;background:#fff"></div>
<svg class="a" style="left:1px;top:3px;" width="17" height="17" viewBox="0 0 17 17"><path d="M3.5 .5H16.5V16.5H.5V3.5Z" fill="#e9f5ea" stroke="#217a3a"/><path d="M4 3H8L9 6L11 3H14L10.5 8.5L14 14H10L9 11L7 14H4L7.5 8.5Z" fill="#2f9a3f"/><path d="M9 6L11 3H14L10.5 8.5Z" fill="#1f6e2f"/></svg>
<div class="a" style="left:21px;top:5px;width:1px;height:13px;background:#9aa0a6"></div>
<svg class="a" style="left:29px;top:4px;" width="15" height="15" viewBox="0 0 15 15"><rect x=".5" y=".5" width="14" height="14" rx="1" fill="#5b5bc8" stroke="#3b3b9a"/><rect x="3" y="1" width="9" height="6" fill="#eef0fa"/><rect x="4" y="10" width="6" height="4" fill="#2a2a55"/><rect x="7" y="11" width="2" height="2" fill="#ddd"/></svg>
<svg class="a" style="left:51px;top:3px;" width="15" height="15" viewBox="0 0 15 15"><path d="M5 8Q7 2.5 10.5 2.5Q14 3 13.8 7.5Q13.5 11.5 9.5 14.5" fill="none" stroke="#3a78e0" stroke-width="2.4"/><path d="M1 3.5V10.5H8Z" fill="#2d66d0"/></svg>
<svg class="a" style="left:70px;top:9px;" width="6" height="3" viewBox="0 0 6 3"><path d="M0 0H6L3.0 3Z" fill="#111"/></svg>
<svg class="a" style="left:82px;top:3px;" width="15" height="15" viewBox="0 0 15 15"><path d="M10 8Q8 2.5 4.5 2.5Q1 3 1.2 7.5Q1.5 11.5 5.5 14.5" fill="none" stroke="#b5b5b5" stroke-width="2.4"/><path d="M14 3.5V10.5H7Z" fill="#b5b5b5"/></svg>
<svg class="a" style="left:102px;top:9px;" width="6" height="3" viewBox="0 0 6 3"><path d="M0 0H6L3.0 3Z" fill="#b9b9b9"/></svg>
<svg class="a" style="left:116px;top:2px;" width="16" height="15" viewBox="0 0 16 15"><defs><linearGradient id="bk2" x1="0" y1="0" x2="1" y2="1"><stop offset=".35" stop-color="#fff"/><stop offset="1" stop-color="#8fb0e8"/></linearGradient></defs><path d="M1.5 8L7.5 2L13.5 8L7.5 14Z" fill="url(#bk2)" stroke="#2b4f95" stroke-width="1.1"/><path d="M5.5 6.5V3Q7 .5 8.5 3V7.5" fill="none" stroke="#5a6a8a" stroke-width="1"/><path d="M13 6Q15.8 7 15.3 11Q15 13.5 14 13.5L12.5 9.5Z" fill="#2f66d8"/></svg>
<svg class="a" style="left:136px;top:9px;" width="6" height="3" viewBox="0 0 6 3"><path d="M0 0H6L3.0 3Z" fill="#111"/></svg>
<svg class="a" style="left:149px;top:4px;" width="16" height="15" viewBox="0 0 16 15"><path d="M.5 .5H8L10.5 3V13.5H.5Z" fill="#fff" stroke="#8aa0bd"/><circle cx="9" cy="8" r="3.6" fill="#dbe9f8" stroke="#777" stroke-width="1.2"/><path d="M11.5 10.5L14.5 13.5" stroke="#e39b28" stroke-width="2.4"/></svg>
<div class="a" style="left:170px;top:5px;width:1px;height:13px;background:#9aa0a6"></div>
<svg class="a" style="left:175px;top:8px;" width="8" height="8" viewBox="0 0 8 8"><rect x="0" y="1" width="7" height="1" fill="#111"/><path d="M0 4H7L3.5 7.5Z" fill="#111"/></svg>
<div class="a" style="left:185px;top:1px;width:1032px;height:23px;background:linear-gradient(#fb2020,#d70000);border-radius:0 0 2px 2px"></div>
<div class="a" style="left:283px;top:7px;width:800px;text-align:center;font-size:11.8px;color:#141414;white-space:nowrap;line-height:13px">DC_Consumers &amp; Payment&nbsp; -&nbsp; Microsoft Excel (Product Activation Failed)</div>
<div class="a" style="left:1245px;top:14px;width:11px;height:1px;background:#222"></div>
<svg class="a" style="left:1289px;top:8px;" width="12" height="12" viewBox="0 0 12 12"><rect x=".5" y="2.5" width="8" height="9" rx="1" fill="none" stroke="#222"/><path d="M2.5 2.5V1.5Q2.5 .5 3.5 .5H10.5Q11.5 .5 11.5 1.5V8.5Q11.5 9.5 10.5 9.5H8.5" fill="none" stroke="#222"/></svg>
<svg class="a" style="left:1335px;top:8px;" width="12" height="12" viewBox="0 0 12 12"><path d="M.5 .5L11.5 11.5M11.5 .5L.5 11.5" stroke="#222" stroke-width="1.1"/></svg>
<div class="a" style="left:0;top:48px;width:1366px;height:1px;background:#b6babf"></div>
<div class="a" style="left:0;top:25px;width:56px;height:24px;border-radius:3px 3px 0 0;background:radial-gradient(ellipse 70% 60% at 50% 45%,#2a8530 0%,#35953a 60%,#5fc050 100%);border:1px solid #1f6a2a;border-bottom:none"></div>
<div class="a" style="left:19px;top:32px;font-size:12px;color:#fff;white-space:nowrap;line-height:1;font-weight:normal;letter-spacing:.2px">File</div>
<div class="a" style="left:60px;top:25px;width:57px;height:25px;border:1px solid #b6babf;border-bottom:none;border-radius:3px 3px 0 0;background:#fff"></div>
<div class="a" style="left:73px;top:32px;font-size:11.3px;color:#444;white-space:nowrap;line-height:1;">Home</div>
<div class="a" style="left:131px;top:32px;font-size:11.3px;color:#444;white-space:nowrap;line-height:1;">Insert</div>
<div class="a" style="left:188px;top:32px;font-size:11.3px;color:#444;white-space:nowrap;line-height:1;">Page Layout</div>
<div class="a" style="left:278px;top:32px;font-size:11.3px;color:#444;white-space:nowrap;line-height:1;">Formulas</div>
<div class="a" style="left:353px;top:32px;font-size:11.3px;color:#444;white-space:nowrap;line-height:1;">Data</div>
<div class="a" style="left:405px;top:32px;font-size:11.3px;color:#444;white-space:nowrap;line-height:1;">Review</div>
<div class="a" style="left:469px;top:32px;font-size:11.3px;color:#444;white-space:nowrap;line-height:1;">View</div>
<svg class="a" style="left:1262px;top:32px;" width="11" height="9" viewBox="0 0 11 9"><path d="M1 7L5.5 2L10 7L8.5 8L5.5 4.5L2.5 8Z" fill="#fff" stroke="#444" stroke-width="1"/></svg>
<svg class="a" style="left:1280px;top:28px;" width="18" height="18" viewBox="0 0 18 18"><circle cx="9" cy="9" r="8.3" fill="#4b86d6" stroke="#3a70bd"/><text x="9" y="13.6" font-size="13" font-weight="bold" text-anchor="middle" fill="#fff" font-family="Liberation Sans">?</text></svg>
<svg class="a" style="left:1305px;top:34px;" width="13" height="7" viewBox="0 0 13 7"><rect x=".5" y="1.5" width="11" height="5" rx="1.5" fill="#fff" stroke="#444"/></svg>
<svg class="a" style="left:1326px;top:30px;" width="14" height="12" viewBox="0 0 14 12"><rect x=".5" y="4.5" width="8" height="7" fill="#fff" stroke="#444"/><rect x="2.5" y="6.5" width="4" height="3" fill="none" stroke="#444"/><path d="M4.5 4.5V.5H12.5V7.5H8.5" fill="none" stroke="#444"/><rect x="6.5" y="2.5" width="4" height="2" fill="none" stroke="#444"/></svg>
<svg class="a" style="left:1349px;top:30px;" width="13" height="11" viewBox="0 0 13 11"><path d="M1 1L12 10M12 1L1 10" stroke="#444" stroke-width="3"/><path d="M1 1L12 10M12 1L1 10" stroke="#fff" stroke-width="1.2"/></svg>
<div class="a" style="left:0;top:49px;width:1366px;height:86px;background:linear-gradient(#fff 0%,#fefefe 50%,#e6e9ed 100%)"></div>
<div class="a" style="left:0;top:134px;width:1366px;height:1px;background:#aeb3ba"></div>
<div class="a" style="left:150px;top:50px;width:1px;height:84px;background:linear-gradient(#dde0e4,#c3c8ce)"></div>
<div class="a" style="left:151px;top:50px;width:1px;height:84px;background:#fff;opacity:.7"></div>
<div class="a" style="left:359px;top:50px;width:1px;height:84px;background:linear-gradient(#dde0e4,#c3c8ce)"></div>
<div class="a" style="left:360px;top:50px;width:1px;height:84px;background:#fff;opacity:.7"></div>
<div class="a" style="left:618px;top:50px;width:1px;height:84px;background:linear-gradient(#dde0e4,#c3c8ce)"></div>
<div class="a" style="left:619px;top:50px;width:1px;height:84px;background:#fff;opacity:.7"></div>
<div class="a" style="left:761px;top:50px;width:1px;height:84px;background:linear-gradient(#dde0e4,#c3c8ce)"></div>
<div class="a" style="left:762px;top:50px;width:1px;height:84px;background:#fff;opacity:.7"></div>
<div class="a" style="left:936px;top:50px;width:1px;height:84px;background:linear-gradient(#dde0e4,#c3c8ce)"></div>
<div class="a" style="left:937px;top:50px;width:1px;height:84px;background:#fff;opacity:.7"></div>
<div class="a" style="left:1071px;top:50px;width:1px;height:84px;background:linear-gradient(#dde0e4,#c3c8ce)"></div>
<div class="a" style="left:1072px;top:50px;width:1px;height:84px;background:#fff;opacity:.7"></div>
<div class="a" style="left:1248px;top:50px;width:1px;height:84px;background:linear-gradient(#dde0e4,#c3c8ce)"></div>
<div class="a" style="left:1249px;top:50px;width:1px;height:84px;background:#fff;opacity:.7"></div>
<div class="a" style="left:40px;top:121px;font-size:11.8px;color:#6a7891;white-space:nowrap;line-height:1;">Clipboard</div>
<div class="a" style="left:234px;top:121px;font-size:11.8px;color:#6a7891;white-space:nowrap;line-height:1;">Font</div>
<div class="a" style="left:453px;top:121px;font-size:11.8px;color:#6a7891;white-space:nowrap;line-height:1;">Alignment</div>
<div class="a" style="left:660px;top:121px;font-size:11.8px;color:#6a7891;white-space:nowrap;line-height:1;">Number</div>
<div class="a" style="left:835px;top:121px;font-size:11.8px;color:#6a7891;white-space:nowrap;line-height:1;">Styles</div>
<div class="a" style="left:994px;top:121px;font-size:11.8px;color:#6a7891;white-space:nowrap;line-height:1;">Cells</div>
<div class="a" style="left:1142px;top:121px;font-size:11.8px;color:#6a7891;white-space:nowrap;line-height:1;">Editing</div>
<svg class="a" style="left:138px;top:123px;" width="8" height="8" viewBox="0 0 8 8"><path d="M.5 7V.5H7" fill="none" stroke="#9aa3ae"/><path d="M3 3L7 7M7 4V7H4" fill="none" stroke="#7d8794"/></svg>
<svg class="a" style="left:347px;top:123px;" width="8" height="8" viewBox="0 0 8 8"><path d="M.5 7V.5H7" fill="none" stroke="#9aa3ae"/><path d="M3 3L7 7M7 4V7H4" fill="none" stroke="#7d8794"/></svg>
<svg class="a" style="left:605px;top:123px;" width="8" height="8" viewBox="0 0 8 8"><path d="M.5 7V.5H7" fill="none" stroke="#9aa3ae"/><path d="M3 3L7 7M7 4V7H4" fill="none" stroke="#7d8794"/></svg>
<svg class="a" style="left:749px;top:123px;" width="8" height="8" viewBox="0 0 8 8"><path d="M.5 7V.5H7" fill="none" stroke="#9aa3ae"/><path d="M3 3L7 7M7 4V7H4" fill="none" stroke="#7d8794"/></svg>
<svg class="a" style="left:11px;top:53px;" width="29" height="32" viewBox="0 0 29 32"><defs><linearGradient id="cb" x1="0" y1="0" x2="0" y2="1"><stop offset="0" stop-color="#f7d088"/><stop offset="1" stop-color="#eab55a"/></linearGradient></defs>
<rect x="1.5" y="3.5" width="24" height="24" rx="2" fill="url(#cb)" stroke="#cf9a45"/>
<path d="M6.5 4.5H20.5V8.5H6.5Z" fill="#e9ecef" stroke="#8a8f96"/><circle cx="13.5" cy="3" r="2.2" fill="#e9ecef" stroke="#8a8f96"/>
<path d="M9.5 12.5H22.5L27.5 17.5V31.5H9.5Z" fill="#fff" stroke="#7f8fa6"/><path d="M22.5 12.5V17.5H27.5" fill="#e8edf3" stroke="#7f8fa6"/>
<path d="M12 16.5H20M12 19H20M12 21.5H25M12 24H25M12 26.5H25M12 29H25" stroke="#b8c3d2"/></svg>
<div class="a" style="left:11px;top:91px;font-size:11.2px;color:#1e1e1e;white-space:nowrap;line-height:1;">Paste</div>
<svg class="a" style="left:22px;top:107px;" width="6" height="3" viewBox="0 0 6 3"><path d="M0 0H6L3.0 3Z" fill="#5c5c5c"/></svg>
<svg class="a" style="left:51px;top:55px;" width="11" height="14" viewBox="0 0 11 14"><path d="M2.5 0L6 8M8.5 0L5 8" stroke="#6e737a" stroke-width="1.4"/><circle cx="2.8" cy="10.8" r="2.2" fill="none" stroke="#2456c9" stroke-width="1.6"/><circle cx="8.2" cy="10.8" r="2.2" fill="none" stroke="#2456c9" stroke-width="1.6"/></svg>
<div class="a" style="left:68px;top:57px;font-size:11.5px;color:#1e1e1e;white-space:nowrap;line-height:1;">Cut</div>
<svg class="a" style="left:49px;top:77px;" width="16" height="14" viewBox="0 0 16 14"><path d="M.5 .5H6L8.5 3V10.5H.5Z" fill="#fff" stroke="#3a64b8"/><path d="M2 5H7M2 7H7" stroke="#6a8ad0" stroke-width=".8"/><path d="M6.5 3.5H12L14.5 6V13.5H6.5Z" fill="#fff" stroke="#2a54a8"/><path d="M8 8H13M8 10H13M8 12H13" stroke="#3a64b8" stroke-width=".8"/></svg>
<div class="a" style="left:68px;top:79px;font-size:11.5px;color:#1e1e1e;white-space:nowrap;line-height:1;">Copy</div>
<svg class="a" style="left:99px;top:83px;" width="5" height="3" viewBox="0 0 5 3"><path d="M0 0H5L2.5 3Z" fill="#5c5c5c"/></svg>
<svg class="a" style="left:49px;top:98px;" width="17" height="16" viewBox="0 0 17 16"><path d="M10 6L14.5 1.5Q16 .5 16.5 2L12 7" fill="#6b6fc7" stroke="#4a4fa8" stroke-width=".8"/><path d="M6.5 5.5L11.5 10.5L9 13L7 11L5 15L1 10L5 8.5Z" fill="#e8d98a" stroke="#9a8a40" stroke-width=".8"/><path d="M7 5.5L11.5 10L13 8.5L8.5 4Z" fill="#bfc4cc" stroke="#777" stroke-width=".6"/></svg>
<div class="a" style="left:68px;top:101px;font-size:11.5px;color:#1e1e1e;white-space:nowrap;line-height:1;">Format Painter</div>
<div class="a" style="left:156px;top:59px;width:112px;height:22px;background:#fff;border:1px solid #c3c8cf"></div>
<div class="a" style="left:267px;top:59px;width:44px;height:22px;background:#fff;border:1px solid #c3c8cf"></div>
<div class="a" style="left:159px;top:65px;font-size:11.5px;color:#1e1e1e;white-space:nowrap;line-height:1;">Calibri</div>
<div class="a" style="left:272px;top:65px;font-size:11.5px;color:#1e1e1e;white-space:nowrap;line-height:1;">11</div>
<svg class="a" style="left:257px;top:69px;" width="5" height="3" viewBox="0 0 5 3"><path d="M0 0H5L2.5 3Z" fill="#6a6a6a"/></svg>
<svg class="a" style="left:300px;top:69px;" width="5" height="3" viewBox="0 0 5 3"><path d="M0 0H5L2.5 3Z" fill="#6a6a6a"/></svg>
<svg class="a" style="left:315px;top:62px;" width="16" height="15" viewBox="0 0 16 15"><text x="0" y="14" font-family="Liberation Serif" font-weight="bold" font-size="15" fill="#2a2a2a">A</text><path d="M10.5 3L13 0.5L15.5 3Z" fill="#3a6fc9"/></svg>
<svg class="a" style="left:337px;top:62px;" width="16" height="15" viewBox="0 0 16 15"><text x="1" y="14" font-family="Liberation Serif" font-weight="bold" font-size="11" fill="#2a2a2a">A</text><path d="M10.5 .5H15.5L13 3Z" fill="#3a6fc9"/></svg>
<svg class="a" style="left:162px;top:91px;" width="14" height="14" viewBox="0 0 14 14"><text x="0" y="12.3" font-family="Liberation Serif" font-weight="bold" font-size="14.5" fill="#1a1a1a">B</text></svg>
<svg class="a" style="left:185px;top:93px;" width="12" height="13" viewBox="0 0 12 13"><path d="M5 .8H11M2 10.2H8M8.2 1L4.8 10" stroke="#1a1a1a" stroke-width="1.5" fill="none"/></svg>
<svg class="a" style="left:208px;top:93px;" width="12" height="15" viewBox="0 0 12 15"><path d="M0 .8H4M7 .8H11" stroke="#1a1a1a" stroke-width="1.4"/><path d="M2 .8V6.5Q2 9.5 5.5 9.5Q9 9.5 9 6.5V.8" stroke="#1a1a1a" stroke-width="2" fill="none"/><rect x="1" y="11.2" width="9" height="1.3" fill="#1a1a1a"/></svg>
<svg class="a" style="left:228px;top:97px;" width="5" height="3" viewBox="0 0 5 3"><path d="M0 0H5L2.5 3Z" fill="#6a6a6a"/></svg>
<div class="a" style="left:241px;top:89px;width:1px;height:20px;background:#d5d9de"></div>
<svg class="a" style="left:251px;top:93px;" width="14" height="14" viewBox="0 0 14 14"><path d="M.5 .5H13.5V13.5H.5ZM7 .5V13.5M.5 7H13.5" fill="none" stroke="#111" stroke-width="1.1"/></svg>
<svg class="a" style="left:272px;top:97px;" width="5" height="3" viewBox="0 0 5 3"><path d="M0 0H5L2.5 3Z" fill="#6a6a6a"/></svg>
<div class="a" style="left:284px;top:89px;width:1px;height:20px;background:#d5d9de"></div>
<svg class="a" style="left:293px;top:90px;" width="17" height="18" viewBox="0 0 17 18"><defs><linearGradient id="bk" x1="0" y1="0" x2="1" y2="1"><stop offset=".4" stop-color="#fff"/><stop offset="1" stop-color="#8fb0e8"/></linearGradient></defs><path d="M2 7.5L7.5 2L13.5 8L8 13.5Z" fill="url(#bk)" stroke="#2b4f95" stroke-width="1"/><path d="M5.5 6V3Q7 .5 8.5 3V7" fill="none" stroke="#4a5a7a" stroke-width="1"/><path d="M13.5 5.5Q16 6.5 15.5 10Q15 12.5 14 12.5L13 9Z" fill="#3a6ad8"/><rect x=".5" y="13.5" width="15" height="3.5" fill="#fff" stroke="#8a8a8a"/></svg>
<svg class="a" style="left:314px;top:97px;" width="5" height="3" viewBox="0 0 5 3"><path d="M0 0H5L2.5 3Z" fill="#6a6a6a"/></svg>
<svg class="a" style="left:326px;top:90px;" width="17" height="18" viewBox="0 0 17 18"><text x="8" y="12.3" text-anchor="middle" font-family="Liberation Serif" font-weight="bold" font-size="14.5" fill="#2a4d9c">A</text><rect x="0" y="13" width="16" height="4" fill="#ff0000"/></svg>
<svg class="a" style="left:347px;top:97px;" width="5" height="3" viewBox="0 0 5 3"><path d="M0 0H5L2.5 3Z" fill="#6a6a6a"/></svg>
<div class="a" style="left:388px;top:59px;width:24px;height:22px;border:1px solid #d9a54f;border-radius:3px;background:linear-gradient(#fde9a6,#fbd86f)"></div>
<div class="a" style="left:388px;top:88px;width:24px;height:22px;border:1px solid #d9a54f;border-radius:3px;background:linear-gradient(#fde9a6,#fbd86f)"></div>
<svg class="a" style="left:370px;top:63px;" width="15" height="8" viewBox="0 0 15 8"><rect x="0" y="0" width="14" height="1.1" fill="#111"/><rect x="1" y="2" width="12" height="1.1" fill="#111"/><rect x="0" y="4" width="14" height="1.1" fill="#111"/><rect x="1" y="6" width="12" height="1.1" fill="#111"/></svg>
<svg class="a" style="left:393px;top:67px;" width="15" height="8" viewBox="0 0 15 8"><rect x="0" y="0" width="14" height="1.1" fill="#111"/><rect x="1" y="2" width="12" height="1.1" fill="#111"/><rect x="0" y="4" width="14" height="1.1" fill="#111"/><rect x="1" y="6" width="12" height="1.1" fill="#111"/></svg>
<svg class="a" style="left:416px;top:70px;" width="15" height="8" viewBox="0 0 15 8"><rect x="0" y="0" width="14" height="1.1" fill="#111"/><rect x="1" y="2" width="12" height="1.1" fill="#111"/><rect x="0" y="4" width="14" height="1.1" fill="#111"/><rect x="1" y="6" width="12" height="1.1" fill="#111"/></svg>
<svg class="a" style="left:370px;top:93px;" width="15" height="12" viewBox="0 0 15 12"><rect x="0" y="0" width="14" height="1.1" fill="#111"/><rect x="0" y="2" width="10" height="1.1" fill="#111"/><rect x="0" y="4" width="14" height="1.1" fill="#111"/><rect x="0" y="6" width="10" height="1.1" fill="#111"/><rect x="0" y="8" width="14" height="1.1" fill="#111"/><rect x="0" y="10" width="10" height="1.1" fill="#111"/></svg>
<svg class="a" style="left:393px;top:93px;" width="15" height="12" viewBox="0 0 15 12"><rect x="0" y="0" width="14" height="1.1" fill="#111"/><rect x="2" y="2" width="10" height="1.1" fill="#111"/><rect x="0" y="4" width="14" height="1.1" fill="#111"/><rect x="2" y="6" width="10" height="1.1" fill="#111"/><rect x="0" y="8" width="14" height="1.1" fill="#111"/><rect x="2" y="10" width="10" height="1.1" fill="#111"/></svg>
<svg class="a" style="left:416px;top:93px;" width="15" height="12" viewBox="0 0 15 12"><rect x="0" y="0" width="14" height="1.1" fill="#111"/><rect x="4" y="2" width="10" height="1.1" fill="#111"/><rect x="0" y="4" width="14" height="1.1" fill="#111"/><rect x="4" y="6" width="10" height="1.1" fill="#111"/><rect x="0" y="8" width="14" height="1.1" fill="#111"/><rect x="4" y="10" width="10" height="1.1" fill="#111"/></svg>
<div class="a" style="left:438px;top:59px;width:1px;height:20px;background:#d5d9de"></div>
<div class="a" style="left:438px;top:88px;width:1px;height:20px;background:#d5d9de"></div>
<svg class="a" style="left:446px;top:61px;" width="20" height="18" viewBox="0 0 20 18"><g transform="rotate(-45 8 9)"><text x="1" y="12" font-family="Liberation Sans" font-weight="bold" font-size="10.5" fill="#222" transform="rotate(90 8 9)"></text></g><text x="0" y="0" font-family="Liberation Sans" font-weight="bold" font-size="10.5" fill="#222" transform="translate(5 15) rotate(-45)">ab</text><path d="M9 17L17 9M14 9H17V12" fill="none" stroke="#555" stroke-width="1.1"/></svg>
<svg class="a" style="left:465px;top:68px;" width="5" height="3" viewBox="0 0 5 3"><path d="M0 0H5L2.5 3Z" fill="#6a6a6a"/></svg>
<svg class="a" style="left:447px;top:90px;" width="18" height="17" viewBox="0 0 18 17"><path d="M1 7.5L5 4.5V10.5Z" fill="#3a6fc9"/><rect x="2" y="7" width="5" height="1.3" fill="#3a6fc9"/><rect x="8" y="3" width="9" height="2" fill="#111"/><rect x="8" y="6.5" width="6" height="2" fill="#111"/><rect x="1" y="11" width="16" height="1.3" fill="#111"/><rect x="1" y="13.5" width="5" height="1.3" fill="#111"/><rect x="1" y="1" width="5" height="1.3" fill="#111"/><path d="M7 0V17" stroke="#111" stroke-dasharray="1 1.5"/></svg>
<svg class="a" style="left:469px;top:90px;" width="18" height="17" viewBox="0 0 18 17"><path d="M6 7.5L2 4.5V10.5Z" fill="#3a6fc9"/><rect x="0" y="7" width="5" height="1.3" fill="#3a6fc9"/><rect x="8" y="3" width="9" height="2" fill="#111"/><rect x="8" y="6.5" width="6" height="2" fill="#111"/><rect x="1" y="11" width="16" height="1.3" fill="#111"/><rect x="1" y="13.5" width="5" height="1.3" fill="#111"/><rect x="1" y="1" width="5" height="1.3" fill="#111"/><path d="M7 0V17" stroke="#111" stroke-dasharray="1 1.5"/></svg>
<div class="a" style="left:492px;top:57px;width:1px;height:55px;background:#d5d9de"></div>
<svg class="a" style="left:500px;top:62px;" width="17" height="16" viewBox="0 0 17 16"><rect x=".5" y=".5" width="11" height="4" rx="1" fill="#e6ecf5" stroke="#4a6a9a"/><rect x="2" y="2" width="14.5" height="1.2" fill="#b06a2a"/><rect x=".5" y="7.5" width="11" height="7" rx="1" fill="#e6ecf5" stroke="#4a6a9a"/><rect x="2" y="9.5" width="7" height="1.2" fill="#b06a2a"/><rect x="2" y="12" width="7" height="1.2" fill="#b06a2a"/><path d="M15.5 5V8.5H13M13 8.5L15 6.5" fill="none" stroke="#3a6fc9"/></svg>
<div class="a" style="left:519px;top:65px;font-size:11.4px;color:#1e1e1e;white-space:nowrap;line-height:1;">Wrap Text</div>
<svg class="a" style="left:500px;top:91px;" width="17" height="16" viewBox="0 0 17 16"><rect x=".5" y=".5" width="15" height="14" fill="#c9d7ec" stroke="#4a6a9a"/><path d="M8 .5V4M8 11V14.5M.5 4H15.5M.5 11H15.5" stroke="#4a6a9a"/><rect x="1" y="4.5" width="14" height="6" fill="#fff"/><text x="8" y="10.5" text-anchor="middle" font-family="Liberation Serif" font-weight="bold" font-size="10" fill="#111">a</text><path d="M1 7.5H4.5M11.5 7.5H15M1 7.5L2.5 6M1 7.5L2.5 9M15 7.5L13.5 6M15 7.5L13.5 9" stroke="#222" stroke-width=".9" fill="none"/></svg>
<div class="a" style="left:519px;top:94px;font-size:11.5px;color:#1e1e1e;white-space:nowrap;line-height:1;">Merge &amp; Center</div>
<svg class="a" style="left:607px;top:97px;" width="5" height="3" viewBox="0 0 5 3"><path d="M0 0H5L2.5 3Z" fill="#6a6a6a"/></svg>
<div class="a" style="left:624px;top:59px;width:134px;height:22px;background:#fff;border:1px solid #c3c8cf"></div>
<div class="a" style="left:627px;top:65px;font-size:11px;color:#1e1e1e;white-space:nowrap;line-height:1;">General</div>
<svg class="a" style="left:748px;top:69px;" width="5" height="3" viewBox="0 0 5 3"><path d="M0 0H5L2.5 3Z" fill="#6a6a6a"/></svg>
<svg class="a" style="left:628px;top:91px;" width="17" height="17" viewBox="0 0 17 17"><rect x="0" y="0" width="16" height="10" fill="#2f5cb8" stroke="#1f4090" stroke-width=".6"/><ellipse cx="8" cy="5" rx="6" ry="3.4" fill="#8fb0e8" stroke="#e8f0ff" stroke-width=".9"/><path d="M8 2V8" stroke="#e8f0ff" stroke-width=".7"/><ellipse cx="11.5" cy="10" rx="3.2" ry="1.4" fill="#f0b820" stroke="#a07808" stroke-width=".6"/><ellipse cx="11.5" cy="12" rx="3.2" ry="1.4" fill="#f0b820" stroke="#a07808" stroke-width=".6"/><ellipse cx="11.5" cy="14" rx="3.2" ry="1.4" fill="#f0b820" stroke="#a07808" stroke-width=".6"/><ellipse cx="10" cy="15.6" rx="3.2" ry="1.3" fill="#f0b820" stroke="#a07808" stroke-width=".6"/><ellipse cx="4" cy="12.5" rx="2.8" ry="1.2" fill="#f0b820" stroke="#a07808" stroke-width=".6"/></svg>
<svg class="a" style="left:649px;top:97px;" width="5" height="3" viewBox="0 0 5 3"><path d="M0 0H5L2.5 3Z" fill="#6a6a6a"/></svg>
<div class="a" style="left:664px;top:93px;font-size:13px;color:#222;white-space:nowrap;line-height:1;font-weight:normal">%</div>
<svg class="a" style="left:690px;top:96px;" width="6" height="8" viewBox="0 0 6 8"><circle cx="3" cy="2.5" r="2" fill="#222"/><path d="M4.5 3Q4.5 6 2 7.5" stroke="#222" stroke-width="1.4" fill="none"/></svg>
<div class="a" style="left:707px;top:89px;width:1px;height:20px;background:#d5d9de"></div>
<svg class="a" style="left:716px;top:91px;" width="18" height="16" viewBox="0 0 18 16"><path d="M1 3.5L4.5 1V6Z" fill="#3a6fc9"/><rect x="3" y="3" width="4" height="1.3" fill="#3a6fc9"/><text x="7" y="8" font-family="Liberation Sans" font-weight="bold" font-size="8.5" fill="#111">.0</text><text x="5" y="15" font-family="Liberation Sans" font-weight="bold" font-size="8.5" fill="#111">.00</text></svg>
<svg class="a" style="left:738px;top:91px;" width="18" height="16" viewBox="0 0 18 16"><text x="5" y="8" font-family="Liberation Sans" font-weight="bold" font-size="8.5" fill="#111">.00</text><path d="M6 11.5L2.5 9V14Z" fill="#3a6fc9"/><rect x="0" y="11" width="4" height="1.3" fill="#3a6fc9"/><text x="7" y="15" font-family="Liberation Sans" font-weight="bold" font-size="8.5" fill="#111">.0</text></svg>
<svg class="a" style="left:785px;top:55px;" width="32" height="30" viewBox="0 0 32 30"><rect x="1.5" y="1.5" width="28" height="24" fill="#f4f6fa" stroke="#8098bf"/><path d="M8.5 1V25.5" stroke="#8098bf"/><path d="M15.5 1V25.5" stroke="#8098bf"/><path d="M22.5 1V25.5" stroke="#8098bf"/><path d="M1 7.5H29.5" stroke="#8098bf"/><path d="M1 13.5H29.5" stroke="#8098bf"/><path d="M1 19.5H29.5" stroke="#8098bf"/><rect x="8.5" y="1.5" width="6" height="5" fill="#e9493a"/><rect x="8.5" y="7.5" width="11" height="5" fill="#5b86d6"/><rect x="8.5" y="13.5" width="12" height="5" fill="#e9493a"/><rect x="8.5" y="19.5" width="6" height="5" fill="#5b86d6"/><rect x="15.5" y="16.5" width="15" height="12" fill="#f5f7fb" stroke="#6f86ad"/><text x="17" y="22" font-family="Liberation Sans" font-weight="bold" font-size="6.5" fill="#111">&lt;≠</text><text x="17" y="28" font-family="Liberation Sans" font-weight="bold" font-size="6.5" fill="#111">=&gt;</text></svg>
<div class="a" style="left:766px;width:71px;top:91px;font-size:11.8px;color:#1e1e1e;white-space:nowrap;line-height:1;text-align:center;">Conditional</div>
<div class="a" style="left:769px;top:104px;font-size:11.8px;color:#1e1e1e;white-space:nowrap;line-height:1;">Formatting</div>
<svg class="a" style="left:829px;top:108px;" width="5" height="3" viewBox="0 0 5 3"><path d="M0 0H5L2.5 3Z" fill="#6a6a6a"/></svg>
<svg class="a" style="left:847px;top:55px;" width="32" height="30" viewBox="0 0 32 30"><rect x="1.5" y="1.5" width="28" height="24" fill="#f4f6fa" stroke="#8098bf"/><path d="M8.5 1V25.5" stroke="#8098bf"/><path d="M15.5 1V25.5" stroke="#8098bf"/><path d="M22.5 1V25.5" stroke="#8098bf"/><path d="M1 7.5H29.5" stroke="#8098bf"/><path d="M1 13.5H29.5" stroke="#8098bf"/><path d="M1 19.5H29.5" stroke="#8098bf"/><rect x="8.5" y="7.5" width="20" height="17" fill="#8eb0ee" opacity=".9"/><path d="M8.5 13.5H28.5M8.5 19.5H28.5M15.5 7.5V24.5M22.5 7.5V24.5" stroke="#8098bf"/><path d="M30 7L19 22" stroke="#c8c8c8" stroke-width="3"/><path d="M30 7L19 22" stroke="#888" stroke-width=".6"/><path d="M19.5 20.5L21.5 22.5L15 28L10 29L13 24Z" fill="#4a79d0"/><path d="M18 21L21 24" stroke="#9a7a3a" stroke-width="2"/></svg>
<div class="a" style="left:845px;top:91px;font-size:11.8px;color:#1e1e1e;white-space:nowrap;line-height:1;">Format</div>
<div class="a" style="left:839px;top:104px;font-size:11.8px;color:#1e1e1e;white-space:nowrap;line-height:1;">as Table</div>
<svg class="a" style="left:884px;top:108px;" width="5" height="3" viewBox="0 0 5 3"><path d="M0 0H5L2.5 3Z" fill="#6a6a6a"/></svg>
<svg class="a" style="left:895px;top:55px;" width="32" height="30" viewBox="0 0 32 30"><rect x="1.5" y="1.5" width="5" height="5" fill="#f4f6fa" stroke="#8098bf"/><rect x="1.5" y="1.5" width="28" height="24" fill="#f4f6fa" stroke="#8098bf"/><rect x="6.5" y="5.5" width="19" height="15" fill="#8eb0ee" stroke="#6f90d0"/><path d="M1.5 5.5H29.5M1.5 20.5H29.5M6.5 1.5V25.5M25.5 1.5V25.5" stroke="#8098bf"/><path d="M30 7L19 22" stroke="#c8c8c8" stroke-width="3"/><path d="M19.5 20.5L21.5 22.5L15 28L10 29L13 24Z" fill="#4a79d0"/><path d="M18 21L21 24" stroke="#9a7a3a" stroke-width="2"/></svg>
<div class="a" style="left:893px;width:32px;top:91px;font-size:11.8px;color:#1e1e1e;white-space:nowrap;line-height:1;text-align:center;">Cell</div>
<div class="a" style="left:893px;top:104px;font-size:11.8px;color:#1e1e1e;white-space:nowrap;line-height:1;">Styles</div>
<svg class="a" style="left:927px;top:108px;" width="5" height="3" viewBox="0 0 5 3"><path d="M0 0H5L2.5 3Z" fill="#6a6a6a"/></svg>
<svg class="a" style="left:946px;top:55px;" width="33" height="28" viewBox="0 0 33 28"><rect x="1.5" y="1.5" width="15" height="5" fill="#f4f6fa" stroke="#556b8f"/><path d="M9 1.5V6.5" stroke="#556b8f"/><rect x="16.5" y="8.5" width="15" height="6" fill="#6f95dc" stroke="#3f5f9f"/><path d="M24 8.5V14.5" stroke="#3f5f9f"/><path d="M7 11.5H14M7 11.5L10 9M7 11.5L10 14" stroke="#333" stroke-width="1.3" fill="none"/><rect x="1.5" y="16.5" width="15" height="10" fill="#f4f6fa" stroke="#556b8f"/><path d="M9 16.5V26.5M1.5 21.5H16.5" stroke="#556b8f"/></svg>
<div class="a" style="left:938px;width:50px;top:91px;font-size:11.6px;color:#1e1e1e;white-space:nowrap;line-height:1;text-align:center;">Insert</div>
<svg class="a" style="left:960px;top:107px;" width="5" height="3" viewBox="0 0 5 3"><path d="M0 0H5L2.5 3Z" fill="#6a6a6a"/></svg>
<svg class="a" style="left:991px;top:55px;" width="28" height="28" viewBox="0 0 28 28"><rect x="1.5" y="1.5" width="15" height="5" fill="#f4f6fa" stroke="#556b8f"/><path d="M9 1.5V6.5" stroke="#556b8f"/><rect x="6.5" y="8.5" width="12" height="6" fill="none" stroke="#3f5f9f" stroke-dasharray="1 1"/><path d="M14 7L24 17M24 7L14 17" stroke="#e82a1a" stroke-width="1.8"/><rect x="1.5" y="16.5" width="15" height="10" fill="#f4f6fa" stroke="#556b8f"/><path d="M9 16.5V26.5M1.5 21.5H16.5" stroke="#556b8f"/></svg>
<div class="a" style="left:980px;width:50px;top:91px;font-size:11.4px;color:#1e1e1e;white-space:nowrap;line-height:1;text-align:center;">Delete</div>
<svg class="a" style="left:1002px;top:107px;" width="5" height="3" viewBox="0 0 5 3"><path d="M0 0H5L2.5 3Z" fill="#6a6a6a"/></svg>
<svg class="a" style="left:1030px;top:54px;" width="33" height="31" viewBox="0 0 33 31"><path d="M1.5 1V4M27.5 1V4M2 2.5H27" stroke="#333" stroke-dasharray="1 1.5"/><path d="M10 2.5H20M10 2.5L12 1M20 2.5L18 1M10 2.5L12 4M20 2.5L18 4" stroke="#333"/><rect x="1.5" y="5.5" width="29" height="21" rx="1.5" fill="#f4f6fa" stroke="#6f86ad"/><path d="M10.5 5.5V26.5M18.5 5.5V26.5M26.5 5.5V26.5M1.5 10.5H30.5M1.5 21.5H30.5" stroke="#8a9cc0"/><rect x="10.5" y="10.5" width="8" height="11" fill="#6f95dc"/><path d="M3.5 26.5V28.5Q3.5 29.5 5 29.5H9Q10.5 29.5 10.5 28.5V26.5M10.5 28.5Q10.5 29.5 12 29.5H16Q17.5 29.5 17.5 28.5V26.5" fill="#f4f6fa" stroke="#6f86ad"/></svg>
<div class="a" style="left:1022px;width:50px;top:91px;font-size:11px;color:#1e1e1e;white-space:nowrap;line-height:1;text-align:center;">Format</div>
<svg class="a" style="left:1044px;top:107px;" width="5" height="3" viewBox="0 0 5 3"><path d="M0 0H5L2.5 3Z" fill="#6a6a6a"/></svg>
<svg class="a" style="left:1082px;top:56px;" width="11" height="11" viewBox="0 0 11 11"><path d="M.5 .5H10V3H9L8.5 2H3.5L6.5 5.5L3.5 9H8.5L9 8H10V10.5H.5V9.5L4.5 5.5L.5 1.5Z" fill="#111"/></svg>
<div class="a" style="left:1099px;top:57px;font-size:11.4px;color:#1e1e1e;white-space:nowrap;line-height:1;">AutoSum</div>
<svg class="a" style="left:1151px;top:61px;" width="5" height="3" viewBox="0 0 5 3"><path d="M0 0H5L2.5 3Z" fill="#6a6a6a"/></svg>
<svg class="a" style="left:1080px;top:75px;" width="15" height="18" viewBox="0 0 15 18"><rect x=".5" y=".5" width="13" height="16" fill="#e3ecf9" stroke="#5a7fbf"/><rect x="1" y="1" width="12" height="2.5" fill="#5a86d8"/><path d="M5 5H9V9H11.5L7 13.5L2.5 9H5Z" fill="#3a78e0" stroke="#2a5ab5" stroke-width=".6"/></svg>
<div class="a" style="left:1099px;top:79px;font-size:11.4px;color:#1e1e1e;white-space:nowrap;line-height:1;">Fill</div>
<svg class="a" style="left:1119px;top:83px;" width="5" height="3" viewBox="0 0 5 3"><path d="M0 0H5L2.5 3Z" fill="#6a6a6a"/></svg>
<svg class="a" style="left:1080px;top:99px;" width="16" height="14" viewBox="0 0 16 14"><path d="M1.5 9.5L8.5 2.5Q10 1 11.5 2.5L13.5 4.5Q15 6 13.5 7.5L7.5 12.5H4Q2.5 12.5 1.5 11.5Q.5 10.5 1.5 9.5Z" fill="#fff" stroke="#666" stroke-width="1"/><path d="M4.5 6.5L10 12" stroke="#888"/><path d="M6 13.5H15" stroke="#111" stroke-width="1.2"/></svg>
<div class="a" style="left:1099px;top:101px;font-size:11.4px;color:#1e1e1e;white-space:nowrap;line-height:1;">Clear</div>
<svg class="a" style="left:1130px;top:105px;" width="5" height="3" viewBox="0 0 5 3"><path d="M0 0H5L2.5 3Z" fill="#6a6a6a"/></svg>
<svg class="a" style="left:1164px;top:54px;" width="33" height="31" viewBox="0 0 33 31"><text x="1" y="13" font-family="Liberation Serif" font-weight="bold" font-size="15" fill="#3f63b4">A</text><text x="2" y="29" font-family="Liberation Serif" font-weight="bold" font-size="16" fill="#a23a32">Z</text><path d="M10 6H31L23 16V26H18V16Z" fill="#bdbdbd" stroke="#8a8a8a" stroke-width=".8"/><path d="M12 7H29L22 15H19Z" fill="#dcdcdc"/></svg>
<div class="a" style="left:1155px;width:52px;top:91px;font-size:11.6px;color:#1e1e1e;white-space:nowrap;line-height:1;text-align:center;">Sort &amp;</div>
<div class="a" style="left:1163px;top:104px;font-size:11.1px;color:#1e1e1e;white-space:nowrap;line-height:1;">Filter</div>
<svg class="a" style="left:1193px;top:108px;" width="5" height="3" viewBox="0 0 5 3"><path d="M0 0H5L2.5 3Z" fill="#6a6a6a"/></svg>
<svg class="a" style="left:1206px;top:56px;" width="30" height="26" viewBox="0 0 30 26"><defs><linearGradient id="bn" x1="0" y1="0" x2="1" y2="0"><stop offset="0" stop-color="#3d5a96"/><stop offset=".3" stop-color="#c2d3f2"/><stop offset=".6" stop-color="#7690c8"/><stop offset="1" stop-color="#2c4480"/></linearGradient></defs><rect x="10" y="1" width="4" height="4" rx="1.5" fill="url(#bn)"/><rect x="17" y="1" width="4" height="4" rx="1.5" fill="url(#bn)"/><rect x="7" y="4" width="8.5" height="4" rx="1" fill="url(#bn)"/><rect x="15.5" y="4" width="8.5" height="4" rx="1" fill="url(#bn)"/><rect x="5" y="7.5" width="10.5" height="6.5" rx="1" fill="url(#bn)"/><rect x="15.5" y="7.5" width="10.5" height="6.5" rx="1" fill="url(#bn)"/><rect x="12" y="13" width="7" height="3" fill="#2c4480"/><rect x="2" y="13" width="11" height="12" rx="1.5" fill="url(#bn)"/><rect x="18" y="13" width="11" height="12" rx="1.5" fill="url(#bn)"/><path d="M2.5 22H12.5M18.5 22H28.5" stroke="#2c4480" stroke-width="1"/></svg>
<div class="a" style="left:1205px;top:91px;font-size:11.6px;color:#1e1e1e;white-space:nowrap;line-height:1;">Find &amp;</div>
<div class="a" style="left:1204px;top:104px;font-size:10.9px;color:#1e1e1e;white-space:nowrap;line-height:1;">Select</div>
<svg class="a" style="left:1238px;top:108px;" width="5" height="3" viewBox="0 0 5 3"><path d="M0 0H5L2.5 3Z" fill="#6a6a6a"/></svg>
<div class="a" style="left:0;top:135px;width:1366px;height:3px;background:linear-gradient(#d9dde3,#e6e9ee)"></div>
<div class="a" style="left:0;top:138px;width:1366px;height:22px;background:#fff;border-top:1px solid #9aa0a8;border-bottom:1px solid #9aa0a8;border-left:1px solid #9aa0a8"></div>
<div class="a" style="left:0;top:160px;width:1366px;height:3px;background:#fff"></div>
<div class="a" style="left:2px;top:161px;width:1362px;height:2px;background:#e1e5f0"></div>
<div class="a" style="left:0;top:163px;width:1366px;height:1px;background:#9aa0a8"></div>
<div class="a" style="left:160px;top:139px;width:85px;height:20px;background:linear-gradient(#e3e6ea,#d9dde2);border-radius:10px 0 0 10px;border-left:1px solid #9aa0a8;border-right:1px solid #b7bcc3"></div>
<div class="a" style="left:166px;top:145px;width:8px;height:8px;border-radius:50%;background:radial-gradient(circle at 50% 35%,#fafafa,#b9bdc2)"></div>
<div class="a" style="left:54px;top:144px;font-size:12.5px;color:#111;white-space:nowrap;line-height:1;">B1746</div>
<svg class="a" style="left:147px;top:148px;" width="7" height="3" viewBox="0 0 7 3"><path d="M0 0H7L3.5 3Z" fill="#333"/></svg>
<svg class="a" style="left:224px;top:141px;" width="18" height="16" viewBox="0 0 18 16"><text x="1" y="12" font-family="Liberation Serif" font-style="italic" font-weight="bold" font-size="14" fill="#333">f</text><text x="8" y="13" font-family="Liberation Serif" font-style="italic" font-weight="bold" font-size="9" fill="#333">x</text></svg>
<div class="a" style="left:253px;top:144px;font-size:12.5px;color:#111;white-space:nowrap;line-height:1;">1000230128</div>
<div class="a" style="left:1350px;top:139px;width:15px;height:20px;background:#dfe2e6;border-left:1px solid #a9aeb5"></div>
<div class="a" style="left:1365px;top:138px;width:1px;height:25px;background:#9aa0a8"></div>
<svg class="a" style="left:1353px;top:145px;" width="9" height="7" viewBox="0 0 9 7"><path d="M1 1.2L4.5 4.8L8 1.2" fill="none" stroke="#444" stroke-width="1.9"/></svg>
<div class="a" style="left:1346px;top:164px;width:16px;height:518px;background:linear-gradient(90deg,#d6dae0,#e2e5ea 40%,#dfe2e7)"></div>
<div class="a" style="left:1362px;top:164px;width:1px;height:534px;background:#a9aeb5"></div>
<div class="a" style="left:1363px;top:164px;width:3px;height:534px;background:#f0f1f3"></div>
<div class="a" style="left:1347px;top:164px;width:15px;height:8px;background:#fff;border:1px solid #8a9099"></div>
<div class="a" style="left:1350px;top:167px;width:8px;height:1px;background:#666"></div>
<svg class="a" style="left:1349px;top:178px;" width="10" height="6" viewBox="0 0 10 6"><path d="M0 5.5L5 0.5L10 5.5Z" fill="#444"/></svg>
<svg class="a" style="left:1349px;top:671px;" width="10" height="6" viewBox="0 0 10 6"><path d="M0 .5L5 5.5L10 .5Z" fill="#444"/></svg>
<div class="a" style="left:1346px;top:619px;width:15px;height:17px;border:1px solid #8a9099;border-radius:2px;background:linear-gradient(90deg,#fbfbfc,#e4e7eb)"></div>
<div class="a" style="left:1350px;top:623px;width:7px;height:1px;background:#70767f"></div>
<div class="a" style="left:1350px;top:625px;width:7px;height:1px;background:#70767f"></div>
<div class="a" style="left:1350px;top:627px;width:7px;height:1px;background:#70767f"></div>
<div class="a" style="left:1350px;top:629px;width:7px;height:1px;background:#70767f"></div>
<div class="a" style="left:0;top:682px;width:1345px;height:16px;background:#dfe3e8"></div>
<div class="a" style="left:0;top:682px;width:1345px;height:1px;background:#a4a9b0"></div>
<div class="a" style="left:0;top:696px;width:1345px;height:1px;background:#f4f5f7"></div>
<div class="a" style="left:0;top:697px;width:1366px;height:2px;background:#959aa2"></div>
<div class="a" style="left:0;top:683px;width:62px;height:14px;background:linear-gradient(#eceef1,#dde1e6);border-right:1px solid #b4b9c0"></div>
<svg class="a" style="left:6px;top:686px;" width="52" height="8" viewBox="0 0 52 8"><rect x="0" y="0" width="1.2" height="8" fill="#555"/><path d="M7 0L2 4L7 8Z" fill="#555"/><path d="M21 0L16 4L21 8Z" fill="#555"/><path d="M30 0L35 4L30 8Z" fill="#555"/><path d="M43 0L48 4L43 8Z" fill="#555"/><rect x="49" y="0" width="1.2" height="8" fill="#555"/></svg>
<div class="a" style="left:787px;top:683px;width:22px;height:14px;overflow:hidden"><div class="a" style="left:0;top:2px;font-size:11.6px;color:#3d4a5e;white-space:nowrap;line-height:1">Sheet6</div></div>
<div class="a" style="left:148px;top:685px;font-size:11.6px;color:#3d4a5e;white-space:nowrap;line-height:1;">Permanent_DC</div>
<svg class="a" style="left:236px;top:682px;" width="12" height="16" viewBox="0 0 12 16"><path d="M11 0.5L1 15.5" stroke="#9aa1aa" stroke-width="1"/><path d="M2 15.5H6" stroke="#b9bec5"/></svg>
<div class="a" style="left:251px;top:685px;font-size:11.6px;color:#3d4a5e;white-space:nowrap;line-height:1;">OTS</div>
<svg class="a" style="left:278px;top:682px;" width="12" height="16" viewBox="0 0 12 16"><path d="M11 0.5L1 15.5" stroke="#9aa1aa" stroke-width="1"/><path d="M2 15.5H6" stroke="#b9bec5"/></svg>
<div class="a" style="left:293px;top:685px;font-size:11.6px;color:#3d4a5e;white-space:nowrap;line-height:1;">DC_NP</div>
<svg class="a" style="left:334px;top:682px;" width="12" height="16" viewBox="0 0 12 16"><path d="M11 0.5L1 15.5" stroke="#9aa1aa" stroke-width="1"/><path d="M2 15.5H6" stroke="#b9bec5"/></svg>
<div class="a" style="left:350px;top:685px;font-size:11.6px;color:#3d4a5e;white-space:nowrap;line-height:1;">Sheet1</div>
<svg class="a" style="left:393px;top:682px;" width="12" height="16" viewBox="0 0 12 16"><path d="M11 0.5L1 15.5" stroke="#9aa1aa" stroke-width="1"/><path d="M2 15.5H6" stroke="#b9bec5"/></svg>
<div class="a" style="left:413px;top:685px;font-size:11.6px;color:#3d4a5e;white-space:nowrap;line-height:1;">Re-connected cons.</div>
<svg class="a" style="left:528px;top:682px;" width="12" height="16" viewBox="0 0 12 16"><path d="M11 0.5L1 15.5" stroke="#9aa1aa" stroke-width="1"/><path d="M2 15.5H6" stroke="#b9bec5"/></svg>
<div class="a" style="left:547px;top:685px;font-size:11.6px;color:#3d4a5e;white-space:nowrap;line-height:1;">Sheet2</div>
<svg class="a" style="left:587px;top:682px;" width="12" height="16" viewBox="0 0 12 16"><path d="M11 0.5L1 15.5" stroke="#9aa1aa" stroke-width="1"/><path d="M2 15.5H6" stroke="#b9bec5"/></svg>
<div class="a" style="left:606px;top:685px;font-size:11.6px;color:#3d4a5e;white-space:nowrap;line-height:1;">Sheet3</div>
<svg class="a" style="left:646px;top:682px;" width="12" height="16" viewBox="0 0 12 16"><path d="M11 0.5L1 15.5" stroke="#9aa1aa" stroke-width="1"/><path d="M2 15.5H6" stroke="#b9bec5"/></svg>
<div class="a" style="left:667px;top:685px;font-size:11.6px;color:#3d4a5e;white-space:nowrap;line-height:1;">Sheet4</div>
<svg class="a" style="left:707px;top:682px;" width="12" height="16" viewBox="0 0 12 16"><path d="M11 0.5L1 15.5" stroke="#9aa1aa" stroke-width="1"/><path d="M2 15.5H6" stroke="#b9bec5"/></svg>
<div class="a" style="left:727px;top:685px;font-size:11.6px;color:#3d4a5e;white-space:nowrap;line-height:1;">Sheet5</div>
<svg class="a" style="left:767px;top:682px;" width="12" height="16" viewBox="0 0 12 16"><path d="M11 0.5L1 15.5" stroke="#9aa1aa" stroke-width="1"/><path d="M2 15.5H6" stroke="#b9bec5"/></svg>
<svg class="a" style="left:62px;top:682px;" width="84" height="16" viewBox="0 0 84 16"><path d="M0 0H83L71 15H0Z" fill="#fff"/><path d="M83 0.5L71 15.5" stroke="#9aa1aa"/><path d="M0 15.5H71" stroke="#8f959d"/></svg>
<div class="a" style="left:73px;top:685px;font-size:12px;color:#2e4163;white-space:nowrap;line-height:1;font-weight:bold">DC_Cons</div>
<div class="a" style="left:809px;top:683px;width:7px;height:14px;background:#fff;border:1px solid #8a9099"></div>
<div class="a" style="left:812px;top:686px;width:1px;height:8px;background:#777"></div>
<svg class="a" style="left:821px;top:686px;" width="6" height="9" viewBox="0 0 6 9"><path d="M5.5 0L0.5 4.5L5.5 9Z" fill="#444"/></svg>
<div class="a" style="left:832px;top:683px;width:513px;height:14px;background:linear-gradient(#e2e5ea,#d6dae0)"></div>
<div class="a" style="left:834px;top:683px;width:393px;height:14px;border:1px solid #8a9099;border-radius:2px;background:linear-gradient(#fbfbfc,#e4e7eb)"></div>
<div class="a" style="left:1026px;top:687px;width:1px;height:6px;background:#70767f"></div>
<div class="a" style="left:1028px;top:687px;width:1px;height:6px;background:#70767f"></div>
<div class="a" style="left:1030px;top:687px;width:1px;height:6px;background:#70767f"></div>
<div class="a" style="left:1032px;top:687px;width:1px;height:6px;background:#70767f"></div>
<svg class="a" style="left:1327px;top:686px;" width="6" height="9" viewBox="0 0 6 9"><path d="M.5 0L5.5 4.5L.5 9Z" fill="#444"/></svg>
<div class="a" style="left:1338px;top:683px;width:8px;height:15px;background:#fff;border:1px solid #8a9099"></div>
<div class="a" style="left:1341px;top:686px;width:1px;height:8px;background:#777"></div>
<div class="a" style="left:1346px;top:682px;width:16px;height:15px;background:#dfe2e7"></div>
<div class="a" style="left:0;top:699px;width:1366px;height:21px;background:linear-gradient(#f8f9fa 0,#e4e6e9 2px,#d4d7db 50%,#c2c6cb 95%,#b4b8be 100%)"></div>
<div class="a" style="left:8px;top:704px;font-size:11.1px;color:#333;white-space:nowrap;line-height:1;">Select destination and press ENTER or choose Paste</div>
<div class="a" style="left:1124px;top:700px;width:1px;height:18px;background:#b4b9c0"></div>
<div class="a" style="left:682px;top:700px;width:1px;height:19px;background:#a9aeb5"></div>
<div class="a" style="left:1129px;top:700px;width:19px;height:19px;border:1px solid #d9a54f;border-radius:3px;background:linear-gradient(#fde9a6,#fbd86f)"></div>
<svg class="a" style="left:1132px;top:704px;" width="13" height="11" viewBox="0 0 13 11"><rect x=".5" y=".5" width="12" height="10" fill="#fff" stroke="#555"/><path d="M.5 4H12.5M.5 7H12.5M4.5 .5V10.5M8.5 .5V10.5" stroke="#555"/></svg>
<svg class="a" style="left:1150px;top:703px;" width="14" height="13" viewBox="0 0 14 13"><rect x=".5" y=".5" width="13" height="12" fill="#d5d9de" stroke="#666"/><rect x="3.5" y="2.5" width="7" height="8" fill="#fff" stroke="#777"/><path d="M5 5H9M5 7H9" stroke="#999"/></svg>
<svg class="a" style="left:1168px;top:703px;" width="15" height="13" viewBox="0 0 15 13"><rect x=".5" y=".5" width="14" height="12" fill="#c5cad0" stroke="#666"/><rect x="1.5" y="1.5" width="5" height="6" fill="#fff"/><rect x="8.5" y="1.5" width="5" height="6" fill="#fff"/><path d="M7 .5V12.5" stroke="#666"/></svg>
<div class="a" style="left:1195px;top:705px;font-size:11.2px;color:#333;white-space:nowrap;line-height:1;">100%</div>
<svg class="a" style="left:1229px;top:700px;" width="133" height="18" viewBox="0 0 133 18"><circle cx="9" cy="9" r="7.5" fill="#f4f5f7" stroke="#777"/><rect x="5" y="8.3" width="8" height="1.8" fill="#444"/><path d="M17 8.5H117" stroke="#8f949b"/><path d="M17 9.5H117" stroke="#fff"/><path d="M64.5 1.5H71.5V11L68 14.5L64.5 11Z" fill="#f7f8fa" stroke="#777"/><circle cx="124" cy="9" r="7.5" fill="#f4f5f7" stroke="#777"/><rect x="120" y="8.2" width="8" height="1.8" fill="#444"/><rect x="123.1" y="5" width="1.8" height="8" fill="#444"/></svg>
<div class="a" style="left:1060px;top:630px;width:285px;height:52px;overflow:hidden">
<div class="a" style="left:13px;top:15px;font-size:19.5px;color:rgba(150,150,150,.5);white-space:nowrap;line-height:1;">Activate Windows</div>
<div class="a" style="left:13px;top:40px;font-size:14.9px;color:rgba(150,150,150,.5);white-space:nowrap;line-height:1;">Go to Settings to activate Windows.</div>
</div>
<div class="a" style="left:0;top:720px;width:1366px;height:48px;background:#cce5eb"></div>
<div class="a" style="left:0;top:720px;width:1366px;height:1px;background:#b9cdd2"></div>
<svg class="a" style="left:18px;top:725px;" width="30" height="30" viewBox="0 0 30 30"><path d="M7 11Q3 14 3 18Q3.5 21.5 7 21.5Q10.5 21.5 11 18Q11 14.5 8.5 12.5Q9 15 7.5 15.5Q6 15.5 7 11Z" fill="#f25a24"/><path d="M5.5 18.5Q5.5 20.5 7 20.5Q8.5 20.5 8.5 18.5Q8.5 17 7.5 16Q7.5 17.5 6.5 17.5Q5.5 17.5 5.5 18.5Z" fill="#ffb030"/><rect x="13.2" y="13" width="2.6" height="11" rx="1.3" fill="#e8385a"/><circle cx="14.5" cy="25" r="3" fill="#e8385a" stroke="#b8c8f0" stroke-width="1"/><circle cx="20" cy="9" r="8" fill="#c42b1c"/><text x="20" y="13" text-anchor="middle" font-family="Liberation Sans" font-size="11" fill="#fff">2</text></svg>
<div class="a" style="left:50px;top:731px;font-size:12px;color:#1a1a1a;white-space:nowrap;line-height:1;">Hot days ahead</div>
<div class="a" style="left:50px;top:747px;font-size:12px;color:#555;white-space:nowrap;line-height:1;">28°C</div>
<svg class="a" style="left:428px;top:733px;" width="24" height="24" viewBox="0 0 24 24"><defs><linearGradient id="wl" x1="0" y1="0" x2="1" y2="1"><stop offset="0" stop-color="#3ecbf7"/><stop offset="1" stop-color="#0a74d6"/></linearGradient></defs><rect x="0" y="0" width="11" height="11" rx="1" fill="url(#wl)"/><rect x="12.5" y="0" width="11" height="11" rx="1" fill="url(#wl)"/><rect x="0" y="12.5" width="11" height="11" rx="1" fill="url(#wl)"/><rect x="12.5" y="12.5" width="11" height="11" rx="1" fill="url(#wl)"/></svg>
<div class="a" style="left:465px;top:729px;width:219px;height:30px;border-radius:15px;background:#eef5f7;border:1px solid #c5d5da"></div>
<svg class="a" style="left:476px;top:737px;" width="15" height="16" viewBox="0 0 15 16"><circle cx="6" cy="6" r="4.8" fill="none" stroke="#222" stroke-width="1.6"/><path d="M9.5 9.5L14 14" stroke="#222" stroke-width="1.8"/></svg>
<div class="a" style="left:501px;top:738px;font-size:12.5px;color:#555;white-space:nowrap;line-height:1;">Search</div>
<svg class="a" style="left:630px;top:731px;" width="50" height="27" viewBox="0 0 50 27"><defs><radialGradient id="mn" cx=".45" cy=".4" r=".6"><stop offset="0" stop-color="#ffc4d0"/><stop offset="1" stop-color="#e8788f"/></radialGradient><linearGradient id="sk" x1="0" y1="0" x2="0" y2="1"><stop offset="0" stop-color="#1e2a66"/><stop offset=".6" stop-color="#6a4a8a"/><stop offset="1" stop-color="#2a6a7a"/></linearGradient></defs>
<path d="M4 6Q8 1 14 3Q20 0 26 2Q34 0 40 3Q47 2 47 8Q50 14 46 20Q44 26 36 25Q25 27 14 25Q4 26 3 19Q0 13 4 6Z" fill="url(#sk)"/>
<circle cx="25" cy="13" r="9" fill="url(#mn)"/><path d="M3 22L12 17L18 21L28 18L38 22L47 19V24Q40 27 25 27Q8 27 3 24Z" fill="#152040"/>
<circle cx="9" cy="8" r=".8" fill="#fff"/><circle cx="40" cy="7" r=".8" fill="#fff"/><circle cx="37" cy="14" r=".6" fill="#fff"/><circle cx="8" cy="14" r=".6" fill="#fff"/></svg>
<svg class="a" style="left:696px;top:733px;" width="25" height="23" viewBox="0 0 25 23"><rect x="6" y="0" width="18" height="15" rx="1.5" fill="#f2f2f2" stroke="#c9c9c9"/><rect x="0" y="7" width="18" height="16" rx="1.5" fill="#1c1c1c"/><rect x="6" y="7" width="12" height="8" fill="#9a9a9a"/></svg>
<svg class="a" style="left:740px;top:733px;" width="25" height="22" viewBox="0 0 25 22"><defs><linearGradient id="cp1" x1="0.6" y1="0" x2="0.3" y2="1"><stop offset="0" stop-color="#1a8cf0"/><stop offset=".45" stop-color="#20b8a0"/><stop offset=".75" stop-color="#9ad040"/><stop offset="1" stop-color="#f8d020"/></linearGradient><linearGradient id="cp2" x1="0.7" y1="0" x2="0.3" y2="1"><stop offset="0" stop-color="#b848e8"/><stop offset=".5" stop-color="#f05890"/><stop offset="1" stop-color="#ffa050"/></linearGradient></defs>
<path d="M8 0H16Q19 0 18 3L14 15Q13 17.5 10.5 17.5H3Q0 17.5 .7 14.5L4.5 3Q5.5 0 8 0Z" fill="url(#cp1)"/>
<path d="M14 0Q16.5 0 17.5 2.5L18.5 5H11Z" fill="#1460d8"/>
<path d="M14.5 3.5H21.5Q24.5 3.5 23.8 6.5L20 18Q19 20.8 16.5 20.8H9Q6.2 20.8 7 18L10.8 6.5Q11.8 3.5 14.5 3.5Z" fill="url(#cp2)"/>
<path d="M11.5 5.5H16L12.5 15.5H8Z" fill="#f4fafc" opacity=".85"/></svg>
<svg class="a" style="left:784px;top:733px;" width="25" height="23" viewBox="0 0 25 23"><circle cx="19" cy="4" r="3" fill="#7b83eb"/><rect x="15" y="8" width="9" height="10" rx="4" fill="#7b83eb"/><circle cx="12.5" cy="3.5" r="3.5" fill="#5059c9"/><path d="M6 8H19V16Q19 22 12.5 22Q6 22 6 16Z" fill="#5059c9"/><rect x="0" y="6" width="12" height="12" rx="1.5" fill="#4b53bc"/><text x="6" y="15.5" text-anchor="middle" font-family="Liberation Sans" font-weight="bold" font-size="9.5" fill="#fff">T</text></svg>
<svg class="a" style="left:828px;top:732px;" width="25" height="23" viewBox="0 0 25 23"><path d="M0 2Q0 0 2 0H9L11 2H23Q25 2 25 4V7H0Z" fill="#e8a81a"/><rect x="0" y="5" width="25" height="18" rx="1.5" fill="#ffd04a"/><rect x="5" y="14" width="15" height="8" rx="1" fill="#1f7ad8"/><rect x="5" y="14" width="15" height="2" fill="#2a90f0"/></svg>
<div class="a" style="left:837px;top:760px;width:6px;height:3px;border-radius:2px;background:#707a7e"></div>
<svg class="a" style="left:872px;top:731px;" width="25" height="24" viewBox="0 0 25 24"><defs><linearGradient id="eg1" x1="0" y1="0" x2="1" y2="1"><stop offset="0" stop-color="#35c1f1"/><stop offset="1" stop-color="#52d86a"/></linearGradient><linearGradient id="eg2" x1="0" y1="0" x2="0" y2="1"><stop offset="0" stop-color="#1a7ad4"/><stop offset="1" stop-color="#0c59a4"/></linearGradient></defs>
<path d="M12 0C19 0 24 5 24 11C24 15 21 17 17.5 17C14 17 12 15 12 13C12 11 14 10.5 15 10.5C14 7 11 5.5 8 6C4 7 1.5 10 1 13C1 5 6 0 12 0Z" fill="url(#eg1)"/>
<path d="M1 13C1 8 5 5 9 5.5C5 7 4 11 5 14.5C6.5 19 11 21.5 16 21C18.5 20.8 20.5 19.5 21.5 18.5C19.5 22 16 24 12 24C5.5 24 1 19 1 13Z" fill="url(#eg2)"/></svg>
<div class="a" style="left:881px;top:760px;width:6px;height:3px;border-radius:2px;background:#707a7e"></div>
<div class="a" style="left:909px;top:725px;width:39px;height:39px;border-radius:4px;background:#e2eef2"></div>
<svg class="a" style="left:916px;top:732px;" width="23" height="23" viewBox="0 0 23 23"><rect x="1.5" y="1.5" width="19" height="20" fill="#eaf5ea" stroke="#1e7b34"/><path d="M4 4.5H9L11 9L13.5 4.5H18L13.5 12L18.5 19.5H13.5L11 15L8.5 19.5H3.5L8.5 12Z" fill="#2a9a3a"/><path d="M13 13L22 17L20 22L11 18Z" fill="#fff" stroke="#9ac8a0" stroke-width=".6"/><path d="M13 15L20 18M12.5 17L19.5 20" stroke="#6ab87a" stroke-width=".7"/></svg>
<div class="a" style="left:920px;top:760px;width:17px;height:3px;border-radius:2px;background:#0a6cd4"></div>
<svg class="a" style="left:1155px;top:740px;" width="11" height="7" viewBox="0 0 11 7"><path d="M.7 6.3L5.5 1.2L10.3 6.3" fill="none" stroke="#1a1a1a" stroke-width="1.2"/></svg>
<div class="a" style="left:1180px;width:36px;top:732px;font-size:11.2px;color:#1a1a1a;white-space:nowrap;line-height:1;text-align:center;">ENG</div>
<div class="a" style="left:1180px;width:36px;top:748px;font-size:11.2px;color:#1a1a1a;white-space:nowrap;line-height:1;text-align:center;">IN</div>
<svg class="a" style="left:1227px;top:735px;" width="18" height="18" viewBox="0 0 18 18"><rect x=".5" y="1.5" width="11" height="9" fill="none" stroke="#1a1a1a" stroke-width="1"/><path d="M3 13.5H9M6 10.5V13.5" stroke="#1a1a1a"/><rect x="12.5" y=".5" width="3" height="5" rx="1.5" fill="none" stroke="#1a1a1a"/><path d="M14 5.5V15" stroke="#1a1a1a"/></svg>
<svg class="a" style="left:1254px;top:737px;" width="16" height="16" viewBox="0 0 16 16"><path d="M.5 5.5H3.5L7 2.5V11.5L3.5 8.5H.5Z" fill="none" stroke="#1a1a1a"/><circle cx="11" cy="11" r="4.2" fill="#1a1a1a"/><path d="M9 9L13 13M13 9L9 13" stroke="#fff" stroke-width="1.1"/></svg>
<div class="a" style="left:1319px;top:732px;font-size:11.4px;color:#1a1a1a;white-space:nowrap;line-height:1;">15:01</div>
<div class="a" style="left:1285px;top:748px;font-size:11.9px;color:#1a1a1a;white-space:nowrap;line-height:1;">01-04-2026</div>
</body></html>
